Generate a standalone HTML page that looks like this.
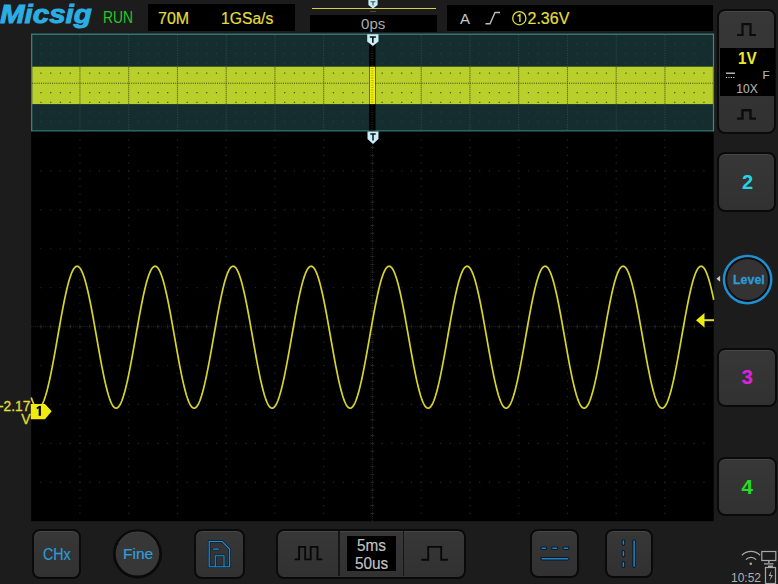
<!DOCTYPE html>
<html><head><meta charset="utf-8">
<style>
html,body{margin:0;padding:0;}
body{width:778px;height:584px;overflow:hidden;background:#1c1c1c;position:relative;font-family:"Liberation Sans",sans-serif;}
.a{position:absolute;}
.box{position:absolute;background:#000;}
.btn{position:absolute;box-sizing:border-box;background:linear-gradient(#383737,#323131);border:2px solid #0a0a0a;border-bottom-width:2.8px;border-radius:8px;box-shadow:inset 0 1px 0 #474646;}
.t{position:absolute;white-space:nowrap;line-height:1;}
</style></head>
<body>
<!-- logo -->
<div class="t" style="left:-0.5px;top:1.8px;font-size:25px;font-weight:bold;font-style:italic;color:#2aaee4;-webkit-text-stroke:0.9px #2aaee4;transform:scaleX(1.18);transform-origin:0 0;">Micsig</div>
<div class="t" style="left:103px;top:8.5px;font-size:17px;color:#25c82a;transform:scaleX(0.815);transform-origin:0 0;">RUN</div>
<div class="box" style="left:148px;top:4px;width:147.3px;height:27.2px;"></div>
<div class="t" style="left:158px;top:11px;font-size:16px;color:#e2df3a;-webkit-text-stroke:0.2px #e2df3a;">70M</div>
<div class="t" style="left:220.5px;top:11px;font-size:16px;color:#e2df3a;-webkit-text-stroke:0.2px #e2df3a;transform:scaleX(0.98);transform-origin:0 0;">1GSa/s</div>
<!-- timebase position -->
<div class="a" style="left:312px;top:7.5px;width:124px;height:1.5px;background:#d8cf40;"></div>
<div class="box" style="left:310px;top:14.5px;width:127px;height:17px;"></div>
<div class="t" style="left:361px;top:16.5px;font-size:14.5px;color:#ababab;transform:scaleX(1.04);transform-origin:0 0;">0ps</div>
<!-- trigger info -->
<div class="box" style="left:446.5px;top:4.5px;width:266px;height:26.5px;"></div>
<div class="t" style="left:460px;top:11px;font-size:15px;color:#c8c8c8;">A</div>
<svg class="a" style="left:484px;top:11px;" width="18" height="15"><path d="M1.5 12.8 H6 L11 1.5 H16" fill="none" stroke="#bdbdbd" stroke-width="1.4"/></svg>
<svg class="a" style="left:511px;top:10px;" width="17" height="17"><circle cx="8.3" cy="8.2" r="6.6" fill="none" stroke="#e2df3a" stroke-width="1.3"/><path d="M6.5 6.3 L8.9 4.6 V12" fill="none" stroke="#e2df3a" stroke-width="1.4"/></svg><div class="t" style="left:527.5px;top:11px;font-size:16px;color:#e2df3a;-webkit-text-stroke:0.2px #e2df3a;">2.36V</div>

<svg class="a" style="left:0;top:0;" width="778" height="584">
<!-- overview -->
<rect x="31.7" y="34.2" width="681.8" height="96.8" fill="#162d2f" stroke="#3a8a85" stroke-width="1.2"/>
<rect x="32.3" y="66.7" width="680.6" height="37.4" fill="#b9cf2c"/>
<line x1="79.95" y1="35.2" x2="79.95" y2="66.7" stroke="#2c5050" stroke-width="1" stroke-dasharray="1 1.5"/>
<line x1="79.95" y1="66.7" x2="79.95" y2="104.1" stroke="#3a4a08" stroke-width="1" stroke-dasharray="1 1"/>
<line x1="79.95" y1="104.1" x2="79.95" y2="130.60000000000002" stroke="#2c5050" stroke-width="1" stroke-dasharray="1 1.5"/>
<line x1="128.70" y1="35.2" x2="128.70" y2="66.7" stroke="#2c5050" stroke-width="1" stroke-dasharray="1 1.5"/>
<line x1="128.70" y1="66.7" x2="128.70" y2="104.1" stroke="#3a4a08" stroke-width="1" stroke-dasharray="1 1"/>
<line x1="128.70" y1="104.1" x2="128.70" y2="130.60000000000002" stroke="#2c5050" stroke-width="1" stroke-dasharray="1 1.5"/>
<line x1="177.45" y1="35.2" x2="177.45" y2="66.7" stroke="#2c5050" stroke-width="1" stroke-dasharray="1 1.5"/>
<line x1="177.45" y1="66.7" x2="177.45" y2="104.1" stroke="#3a4a08" stroke-width="1" stroke-dasharray="1 1"/>
<line x1="177.45" y1="104.1" x2="177.45" y2="130.60000000000002" stroke="#2c5050" stroke-width="1" stroke-dasharray="1 1.5"/>
<line x1="226.20" y1="35.2" x2="226.20" y2="66.7" stroke="#2c5050" stroke-width="1" stroke-dasharray="1 1.5"/>
<line x1="226.20" y1="66.7" x2="226.20" y2="104.1" stroke="#3a4a08" stroke-width="1" stroke-dasharray="1 1"/>
<line x1="226.20" y1="104.1" x2="226.20" y2="130.60000000000002" stroke="#2c5050" stroke-width="1" stroke-dasharray="1 1.5"/>
<line x1="274.95" y1="35.2" x2="274.95" y2="66.7" stroke="#2c5050" stroke-width="1" stroke-dasharray="1 1.5"/>
<line x1="274.95" y1="66.7" x2="274.95" y2="104.1" stroke="#3a4a08" stroke-width="1" stroke-dasharray="1 1"/>
<line x1="274.95" y1="104.1" x2="274.95" y2="130.60000000000002" stroke="#2c5050" stroke-width="1" stroke-dasharray="1 1.5"/>
<line x1="323.70" y1="35.2" x2="323.70" y2="66.7" stroke="#2c5050" stroke-width="1" stroke-dasharray="1 1.5"/>
<line x1="323.70" y1="66.7" x2="323.70" y2="104.1" stroke="#3a4a08" stroke-width="1" stroke-dasharray="1 1"/>
<line x1="323.70" y1="104.1" x2="323.70" y2="130.60000000000002" stroke="#2c5050" stroke-width="1" stroke-dasharray="1 1.5"/>
<line x1="372.45" y1="35.2" x2="372.45" y2="66.7" stroke="#2c5050" stroke-width="1" stroke-dasharray="1 1.5"/>
<line x1="372.45" y1="66.7" x2="372.45" y2="104.1" stroke="#3a4a08" stroke-width="1" stroke-dasharray="1 1"/>
<line x1="372.45" y1="104.1" x2="372.45" y2="130.60000000000002" stroke="#2c5050" stroke-width="1" stroke-dasharray="1 1.5"/>
<line x1="421.20" y1="35.2" x2="421.20" y2="66.7" stroke="#2c5050" stroke-width="1" stroke-dasharray="1 1.5"/>
<line x1="421.20" y1="66.7" x2="421.20" y2="104.1" stroke="#3a4a08" stroke-width="1" stroke-dasharray="1 1"/>
<line x1="421.20" y1="104.1" x2="421.20" y2="130.60000000000002" stroke="#2c5050" stroke-width="1" stroke-dasharray="1 1.5"/>
<line x1="469.95" y1="35.2" x2="469.95" y2="66.7" stroke="#2c5050" stroke-width="1" stroke-dasharray="1 1.5"/>
<line x1="469.95" y1="66.7" x2="469.95" y2="104.1" stroke="#3a4a08" stroke-width="1" stroke-dasharray="1 1"/>
<line x1="469.95" y1="104.1" x2="469.95" y2="130.60000000000002" stroke="#2c5050" stroke-width="1" stroke-dasharray="1 1.5"/>
<line x1="518.70" y1="35.2" x2="518.70" y2="66.7" stroke="#2c5050" stroke-width="1" stroke-dasharray="1 1.5"/>
<line x1="518.70" y1="66.7" x2="518.70" y2="104.1" stroke="#3a4a08" stroke-width="1" stroke-dasharray="1 1"/>
<line x1="518.70" y1="104.1" x2="518.70" y2="130.60000000000002" stroke="#2c5050" stroke-width="1" stroke-dasharray="1 1.5"/>
<line x1="567.45" y1="35.2" x2="567.45" y2="66.7" stroke="#2c5050" stroke-width="1" stroke-dasharray="1 1.5"/>
<line x1="567.45" y1="66.7" x2="567.45" y2="104.1" stroke="#3a4a08" stroke-width="1" stroke-dasharray="1 1"/>
<line x1="567.45" y1="104.1" x2="567.45" y2="130.60000000000002" stroke="#2c5050" stroke-width="1" stroke-dasharray="1 1.5"/>
<line x1="616.20" y1="35.2" x2="616.20" y2="66.7" stroke="#2c5050" stroke-width="1" stroke-dasharray="1 1.5"/>
<line x1="616.20" y1="66.7" x2="616.20" y2="104.1" stroke="#3a4a08" stroke-width="1" stroke-dasharray="1 1"/>
<line x1="616.20" y1="104.1" x2="616.20" y2="130.60000000000002" stroke="#2c5050" stroke-width="1" stroke-dasharray="1 1.5"/>
<line x1="664.95" y1="35.2" x2="664.95" y2="66.7" stroke="#2c5050" stroke-width="1" stroke-dasharray="1 1.5"/>
<line x1="664.95" y1="66.7" x2="664.95" y2="104.1" stroke="#3a4a08" stroke-width="1" stroke-dasharray="1 1"/>
<line x1="664.95" y1="104.1" x2="664.95" y2="130.60000000000002" stroke="#2c5050" stroke-width="1" stroke-dasharray="1 1.5"/>
<line x1="32.2" y1="83.3" x2="712.7" y2="83.3" stroke="#3a4a08" stroke-width="1.1" stroke-dasharray="1 1.2"/>
<path d="M40.35 43.34h1.2v1.2h-1.2z M50.10 43.34h1.2v1.2h-1.2z M59.85 43.34h1.2v1.2h-1.2z M69.60 43.34h1.2v1.2h-1.2z M89.10 43.34h1.2v1.2h-1.2z M98.85 43.34h1.2v1.2h-1.2z M108.60 43.34h1.2v1.2h-1.2z M118.35 43.34h1.2v1.2h-1.2z M137.85 43.34h1.2v1.2h-1.2z M147.60 43.34h1.2v1.2h-1.2z M157.35 43.34h1.2v1.2h-1.2z M167.10 43.34h1.2v1.2h-1.2z M186.60 43.34h1.2v1.2h-1.2z M196.35 43.34h1.2v1.2h-1.2z M206.10 43.34h1.2v1.2h-1.2z M215.85 43.34h1.2v1.2h-1.2z M235.35 43.34h1.2v1.2h-1.2z M245.10 43.34h1.2v1.2h-1.2z M254.85 43.34h1.2v1.2h-1.2z M264.60 43.34h1.2v1.2h-1.2z M284.10 43.34h1.2v1.2h-1.2z M293.85 43.34h1.2v1.2h-1.2z M303.60 43.34h1.2v1.2h-1.2z M313.35 43.34h1.2v1.2h-1.2z M332.85 43.34h1.2v1.2h-1.2z M342.60 43.34h1.2v1.2h-1.2z M352.35 43.34h1.2v1.2h-1.2z M362.10 43.34h1.2v1.2h-1.2z M381.60 43.34h1.2v1.2h-1.2z M391.35 43.34h1.2v1.2h-1.2z M401.10 43.34h1.2v1.2h-1.2z M410.85 43.34h1.2v1.2h-1.2z M430.35 43.34h1.2v1.2h-1.2z M440.10 43.34h1.2v1.2h-1.2z M449.85 43.34h1.2v1.2h-1.2z M459.60 43.34h1.2v1.2h-1.2z M479.10 43.34h1.2v1.2h-1.2z M488.85 43.34h1.2v1.2h-1.2z M498.60 43.34h1.2v1.2h-1.2z M508.35 43.34h1.2v1.2h-1.2z M527.85 43.34h1.2v1.2h-1.2z M537.60 43.34h1.2v1.2h-1.2z M547.35 43.34h1.2v1.2h-1.2z M557.10 43.34h1.2v1.2h-1.2z M576.60 43.34h1.2v1.2h-1.2z M586.35 43.34h1.2v1.2h-1.2z M596.10 43.34h1.2v1.2h-1.2z M605.85 43.34h1.2v1.2h-1.2z M625.35 43.34h1.2v1.2h-1.2z M635.10 43.34h1.2v1.2h-1.2z M644.85 43.34h1.2v1.2h-1.2z M654.60 43.34h1.2v1.2h-1.2z M674.10 43.34h1.2v1.2h-1.2z M683.85 43.34h1.2v1.2h-1.2z M693.60 43.34h1.2v1.2h-1.2z M703.35 43.34h1.2v1.2h-1.2z M40.35 53.08h1.2v1.2h-1.2z M50.10 53.08h1.2v1.2h-1.2z M59.85 53.08h1.2v1.2h-1.2z M69.60 53.08h1.2v1.2h-1.2z M89.10 53.08h1.2v1.2h-1.2z M98.85 53.08h1.2v1.2h-1.2z M108.60 53.08h1.2v1.2h-1.2z M118.35 53.08h1.2v1.2h-1.2z M137.85 53.08h1.2v1.2h-1.2z M147.60 53.08h1.2v1.2h-1.2z M157.35 53.08h1.2v1.2h-1.2z M167.10 53.08h1.2v1.2h-1.2z M186.60 53.08h1.2v1.2h-1.2z M196.35 53.08h1.2v1.2h-1.2z M206.10 53.08h1.2v1.2h-1.2z M215.85 53.08h1.2v1.2h-1.2z M235.35 53.08h1.2v1.2h-1.2z M245.10 53.08h1.2v1.2h-1.2z M254.85 53.08h1.2v1.2h-1.2z M264.60 53.08h1.2v1.2h-1.2z M284.10 53.08h1.2v1.2h-1.2z M293.85 53.08h1.2v1.2h-1.2z M303.60 53.08h1.2v1.2h-1.2z M313.35 53.08h1.2v1.2h-1.2z M332.85 53.08h1.2v1.2h-1.2z M342.60 53.08h1.2v1.2h-1.2z M352.35 53.08h1.2v1.2h-1.2z M362.10 53.08h1.2v1.2h-1.2z M381.60 53.08h1.2v1.2h-1.2z M391.35 53.08h1.2v1.2h-1.2z M401.10 53.08h1.2v1.2h-1.2z M410.85 53.08h1.2v1.2h-1.2z M430.35 53.08h1.2v1.2h-1.2z M440.10 53.08h1.2v1.2h-1.2z M449.85 53.08h1.2v1.2h-1.2z M459.60 53.08h1.2v1.2h-1.2z M479.10 53.08h1.2v1.2h-1.2z M488.85 53.08h1.2v1.2h-1.2z M498.60 53.08h1.2v1.2h-1.2z M508.35 53.08h1.2v1.2h-1.2z M527.85 53.08h1.2v1.2h-1.2z M537.60 53.08h1.2v1.2h-1.2z M547.35 53.08h1.2v1.2h-1.2z M557.10 53.08h1.2v1.2h-1.2z M576.60 53.08h1.2v1.2h-1.2z M586.35 53.08h1.2v1.2h-1.2z M596.10 53.08h1.2v1.2h-1.2z M605.85 53.08h1.2v1.2h-1.2z M625.35 53.08h1.2v1.2h-1.2z M635.10 53.08h1.2v1.2h-1.2z M644.85 53.08h1.2v1.2h-1.2z M654.60 53.08h1.2v1.2h-1.2z M674.10 53.08h1.2v1.2h-1.2z M683.85 53.08h1.2v1.2h-1.2z M693.60 53.08h1.2v1.2h-1.2z M703.35 53.08h1.2v1.2h-1.2z M40.35 62.82h1.2v1.2h-1.2z M50.10 62.82h1.2v1.2h-1.2z M59.85 62.82h1.2v1.2h-1.2z M69.60 62.82h1.2v1.2h-1.2z M89.10 62.82h1.2v1.2h-1.2z M98.85 62.82h1.2v1.2h-1.2z M108.60 62.82h1.2v1.2h-1.2z M118.35 62.82h1.2v1.2h-1.2z M137.85 62.82h1.2v1.2h-1.2z M147.60 62.82h1.2v1.2h-1.2z M157.35 62.82h1.2v1.2h-1.2z M167.10 62.82h1.2v1.2h-1.2z M186.60 62.82h1.2v1.2h-1.2z M196.35 62.82h1.2v1.2h-1.2z M206.10 62.82h1.2v1.2h-1.2z M215.85 62.82h1.2v1.2h-1.2z M235.35 62.82h1.2v1.2h-1.2z M245.10 62.82h1.2v1.2h-1.2z M254.85 62.82h1.2v1.2h-1.2z M264.60 62.82h1.2v1.2h-1.2z M284.10 62.82h1.2v1.2h-1.2z M293.85 62.82h1.2v1.2h-1.2z M303.60 62.82h1.2v1.2h-1.2z M313.35 62.82h1.2v1.2h-1.2z M332.85 62.82h1.2v1.2h-1.2z M342.60 62.82h1.2v1.2h-1.2z M352.35 62.82h1.2v1.2h-1.2z M362.10 62.82h1.2v1.2h-1.2z M381.60 62.82h1.2v1.2h-1.2z M391.35 62.82h1.2v1.2h-1.2z M401.10 62.82h1.2v1.2h-1.2z M410.85 62.82h1.2v1.2h-1.2z M430.35 62.82h1.2v1.2h-1.2z M440.10 62.82h1.2v1.2h-1.2z M449.85 62.82h1.2v1.2h-1.2z M459.60 62.82h1.2v1.2h-1.2z M479.10 62.82h1.2v1.2h-1.2z M488.85 62.82h1.2v1.2h-1.2z M498.60 62.82h1.2v1.2h-1.2z M508.35 62.82h1.2v1.2h-1.2z M527.85 62.82h1.2v1.2h-1.2z M537.60 62.82h1.2v1.2h-1.2z M547.35 62.82h1.2v1.2h-1.2z M557.10 62.82h1.2v1.2h-1.2z M576.60 62.82h1.2v1.2h-1.2z M586.35 62.82h1.2v1.2h-1.2z M596.10 62.82h1.2v1.2h-1.2z M605.85 62.82h1.2v1.2h-1.2z M625.35 62.82h1.2v1.2h-1.2z M635.10 62.82h1.2v1.2h-1.2z M644.85 62.82h1.2v1.2h-1.2z M654.60 62.82h1.2v1.2h-1.2z M674.10 62.82h1.2v1.2h-1.2z M683.85 62.82h1.2v1.2h-1.2z M693.60 62.82h1.2v1.2h-1.2z M703.35 62.82h1.2v1.2h-1.2z M40.35 111.52h1.2v1.2h-1.2z M50.10 111.52h1.2v1.2h-1.2z M59.85 111.52h1.2v1.2h-1.2z M69.60 111.52h1.2v1.2h-1.2z M89.10 111.52h1.2v1.2h-1.2z M98.85 111.52h1.2v1.2h-1.2z M108.60 111.52h1.2v1.2h-1.2z M118.35 111.52h1.2v1.2h-1.2z M137.85 111.52h1.2v1.2h-1.2z M147.60 111.52h1.2v1.2h-1.2z M157.35 111.52h1.2v1.2h-1.2z M167.10 111.52h1.2v1.2h-1.2z M186.60 111.52h1.2v1.2h-1.2z M196.35 111.52h1.2v1.2h-1.2z M206.10 111.52h1.2v1.2h-1.2z M215.85 111.52h1.2v1.2h-1.2z M235.35 111.52h1.2v1.2h-1.2z M245.10 111.52h1.2v1.2h-1.2z M254.85 111.52h1.2v1.2h-1.2z M264.60 111.52h1.2v1.2h-1.2z M284.10 111.52h1.2v1.2h-1.2z M293.85 111.52h1.2v1.2h-1.2z M303.60 111.52h1.2v1.2h-1.2z M313.35 111.52h1.2v1.2h-1.2z M332.85 111.52h1.2v1.2h-1.2z M342.60 111.52h1.2v1.2h-1.2z M352.35 111.52h1.2v1.2h-1.2z M362.10 111.52h1.2v1.2h-1.2z M381.60 111.52h1.2v1.2h-1.2z M391.35 111.52h1.2v1.2h-1.2z M401.10 111.52h1.2v1.2h-1.2z M410.85 111.52h1.2v1.2h-1.2z M430.35 111.52h1.2v1.2h-1.2z M440.10 111.52h1.2v1.2h-1.2z M449.85 111.52h1.2v1.2h-1.2z M459.60 111.52h1.2v1.2h-1.2z M479.10 111.52h1.2v1.2h-1.2z M488.85 111.52h1.2v1.2h-1.2z M498.60 111.52h1.2v1.2h-1.2z M508.35 111.52h1.2v1.2h-1.2z M527.85 111.52h1.2v1.2h-1.2z M537.60 111.52h1.2v1.2h-1.2z M547.35 111.52h1.2v1.2h-1.2z M557.10 111.52h1.2v1.2h-1.2z M576.60 111.52h1.2v1.2h-1.2z M586.35 111.52h1.2v1.2h-1.2z M596.10 111.52h1.2v1.2h-1.2z M605.85 111.52h1.2v1.2h-1.2z M625.35 111.52h1.2v1.2h-1.2z M635.10 111.52h1.2v1.2h-1.2z M644.85 111.52h1.2v1.2h-1.2z M654.60 111.52h1.2v1.2h-1.2z M674.10 111.52h1.2v1.2h-1.2z M683.85 111.52h1.2v1.2h-1.2z M693.60 111.52h1.2v1.2h-1.2z M703.35 111.52h1.2v1.2h-1.2z M40.35 121.26h1.2v1.2h-1.2z M50.10 121.26h1.2v1.2h-1.2z M59.85 121.26h1.2v1.2h-1.2z M69.60 121.26h1.2v1.2h-1.2z M89.10 121.26h1.2v1.2h-1.2z M98.85 121.26h1.2v1.2h-1.2z M108.60 121.26h1.2v1.2h-1.2z M118.35 121.26h1.2v1.2h-1.2z M137.85 121.26h1.2v1.2h-1.2z M147.60 121.26h1.2v1.2h-1.2z M157.35 121.26h1.2v1.2h-1.2z M167.10 121.26h1.2v1.2h-1.2z M186.60 121.26h1.2v1.2h-1.2z M196.35 121.26h1.2v1.2h-1.2z M206.10 121.26h1.2v1.2h-1.2z M215.85 121.26h1.2v1.2h-1.2z M235.35 121.26h1.2v1.2h-1.2z M245.10 121.26h1.2v1.2h-1.2z M254.85 121.26h1.2v1.2h-1.2z M264.60 121.26h1.2v1.2h-1.2z M284.10 121.26h1.2v1.2h-1.2z M293.85 121.26h1.2v1.2h-1.2z M303.60 121.26h1.2v1.2h-1.2z M313.35 121.26h1.2v1.2h-1.2z M332.85 121.26h1.2v1.2h-1.2z M342.60 121.26h1.2v1.2h-1.2z M352.35 121.26h1.2v1.2h-1.2z M362.10 121.26h1.2v1.2h-1.2z M381.60 121.26h1.2v1.2h-1.2z M391.35 121.26h1.2v1.2h-1.2z M401.10 121.26h1.2v1.2h-1.2z M410.85 121.26h1.2v1.2h-1.2z M430.35 121.26h1.2v1.2h-1.2z M440.10 121.26h1.2v1.2h-1.2z M449.85 121.26h1.2v1.2h-1.2z M459.60 121.26h1.2v1.2h-1.2z M479.10 121.26h1.2v1.2h-1.2z M488.85 121.26h1.2v1.2h-1.2z M498.60 121.26h1.2v1.2h-1.2z M508.35 121.26h1.2v1.2h-1.2z M527.85 121.26h1.2v1.2h-1.2z M537.60 121.26h1.2v1.2h-1.2z M547.35 121.26h1.2v1.2h-1.2z M557.10 121.26h1.2v1.2h-1.2z M576.60 121.26h1.2v1.2h-1.2z M586.35 121.26h1.2v1.2h-1.2z M596.10 121.26h1.2v1.2h-1.2z M605.85 121.26h1.2v1.2h-1.2z M625.35 121.26h1.2v1.2h-1.2z M635.10 121.26h1.2v1.2h-1.2z M644.85 121.26h1.2v1.2h-1.2z M654.60 121.26h1.2v1.2h-1.2z M674.10 121.26h1.2v1.2h-1.2z M683.85 121.26h1.2v1.2h-1.2z M693.60 121.26h1.2v1.2h-1.2z M703.35 121.26h1.2v1.2h-1.2z" fill="#223e3c"/>
<path d="M40.35 72.56h1.2v1.2h-1.2z M50.10 72.56h1.2v1.2h-1.2z M59.85 72.56h1.2v1.2h-1.2z M69.60 72.56h1.2v1.2h-1.2z M89.10 72.56h1.2v1.2h-1.2z M98.85 72.56h1.2v1.2h-1.2z M108.60 72.56h1.2v1.2h-1.2z M118.35 72.56h1.2v1.2h-1.2z M137.85 72.56h1.2v1.2h-1.2z M147.60 72.56h1.2v1.2h-1.2z M157.35 72.56h1.2v1.2h-1.2z M167.10 72.56h1.2v1.2h-1.2z M186.60 72.56h1.2v1.2h-1.2z M196.35 72.56h1.2v1.2h-1.2z M206.10 72.56h1.2v1.2h-1.2z M215.85 72.56h1.2v1.2h-1.2z M235.35 72.56h1.2v1.2h-1.2z M245.10 72.56h1.2v1.2h-1.2z M254.85 72.56h1.2v1.2h-1.2z M264.60 72.56h1.2v1.2h-1.2z M284.10 72.56h1.2v1.2h-1.2z M293.85 72.56h1.2v1.2h-1.2z M303.60 72.56h1.2v1.2h-1.2z M313.35 72.56h1.2v1.2h-1.2z M332.85 72.56h1.2v1.2h-1.2z M342.60 72.56h1.2v1.2h-1.2z M352.35 72.56h1.2v1.2h-1.2z M362.10 72.56h1.2v1.2h-1.2z M381.60 72.56h1.2v1.2h-1.2z M391.35 72.56h1.2v1.2h-1.2z M401.10 72.56h1.2v1.2h-1.2z M410.85 72.56h1.2v1.2h-1.2z M430.35 72.56h1.2v1.2h-1.2z M440.10 72.56h1.2v1.2h-1.2z M449.85 72.56h1.2v1.2h-1.2z M459.60 72.56h1.2v1.2h-1.2z M479.10 72.56h1.2v1.2h-1.2z M488.85 72.56h1.2v1.2h-1.2z M498.60 72.56h1.2v1.2h-1.2z M508.35 72.56h1.2v1.2h-1.2z M527.85 72.56h1.2v1.2h-1.2z M537.60 72.56h1.2v1.2h-1.2z M547.35 72.56h1.2v1.2h-1.2z M557.10 72.56h1.2v1.2h-1.2z M576.60 72.56h1.2v1.2h-1.2z M586.35 72.56h1.2v1.2h-1.2z M596.10 72.56h1.2v1.2h-1.2z M605.85 72.56h1.2v1.2h-1.2z M625.35 72.56h1.2v1.2h-1.2z M635.10 72.56h1.2v1.2h-1.2z M644.85 72.56h1.2v1.2h-1.2z M654.60 72.56h1.2v1.2h-1.2z M674.10 72.56h1.2v1.2h-1.2z M683.85 72.56h1.2v1.2h-1.2z M693.60 72.56h1.2v1.2h-1.2z M703.35 72.56h1.2v1.2h-1.2z M40.35 92.04h1.2v1.2h-1.2z M50.10 92.04h1.2v1.2h-1.2z M59.85 92.04h1.2v1.2h-1.2z M69.60 92.04h1.2v1.2h-1.2z M89.10 92.04h1.2v1.2h-1.2z M98.85 92.04h1.2v1.2h-1.2z M108.60 92.04h1.2v1.2h-1.2z M118.35 92.04h1.2v1.2h-1.2z M137.85 92.04h1.2v1.2h-1.2z M147.60 92.04h1.2v1.2h-1.2z M157.35 92.04h1.2v1.2h-1.2z M167.10 92.04h1.2v1.2h-1.2z M186.60 92.04h1.2v1.2h-1.2z M196.35 92.04h1.2v1.2h-1.2z M206.10 92.04h1.2v1.2h-1.2z M215.85 92.04h1.2v1.2h-1.2z M235.35 92.04h1.2v1.2h-1.2z M245.10 92.04h1.2v1.2h-1.2z M254.85 92.04h1.2v1.2h-1.2z M264.60 92.04h1.2v1.2h-1.2z M284.10 92.04h1.2v1.2h-1.2z M293.85 92.04h1.2v1.2h-1.2z M303.60 92.04h1.2v1.2h-1.2z M313.35 92.04h1.2v1.2h-1.2z M332.85 92.04h1.2v1.2h-1.2z M342.60 92.04h1.2v1.2h-1.2z M352.35 92.04h1.2v1.2h-1.2z M362.10 92.04h1.2v1.2h-1.2z M381.60 92.04h1.2v1.2h-1.2z M391.35 92.04h1.2v1.2h-1.2z M401.10 92.04h1.2v1.2h-1.2z M410.85 92.04h1.2v1.2h-1.2z M430.35 92.04h1.2v1.2h-1.2z M440.10 92.04h1.2v1.2h-1.2z M449.85 92.04h1.2v1.2h-1.2z M459.60 92.04h1.2v1.2h-1.2z M479.10 92.04h1.2v1.2h-1.2z M488.85 92.04h1.2v1.2h-1.2z M498.60 92.04h1.2v1.2h-1.2z M508.35 92.04h1.2v1.2h-1.2z M527.85 92.04h1.2v1.2h-1.2z M537.60 92.04h1.2v1.2h-1.2z M547.35 92.04h1.2v1.2h-1.2z M557.10 92.04h1.2v1.2h-1.2z M576.60 92.04h1.2v1.2h-1.2z M586.35 92.04h1.2v1.2h-1.2z M596.10 92.04h1.2v1.2h-1.2z M605.85 92.04h1.2v1.2h-1.2z M625.35 92.04h1.2v1.2h-1.2z M635.10 92.04h1.2v1.2h-1.2z M644.85 92.04h1.2v1.2h-1.2z M654.60 92.04h1.2v1.2h-1.2z M674.10 92.04h1.2v1.2h-1.2z M683.85 92.04h1.2v1.2h-1.2z M693.60 92.04h1.2v1.2h-1.2z M703.35 92.04h1.2v1.2h-1.2z M40.35 101.78h1.2v1.2h-1.2z M50.10 101.78h1.2v1.2h-1.2z M59.85 101.78h1.2v1.2h-1.2z M69.60 101.78h1.2v1.2h-1.2z M89.10 101.78h1.2v1.2h-1.2z M98.85 101.78h1.2v1.2h-1.2z M108.60 101.78h1.2v1.2h-1.2z M118.35 101.78h1.2v1.2h-1.2z M137.85 101.78h1.2v1.2h-1.2z M147.60 101.78h1.2v1.2h-1.2z M157.35 101.78h1.2v1.2h-1.2z M167.10 101.78h1.2v1.2h-1.2z M186.60 101.78h1.2v1.2h-1.2z M196.35 101.78h1.2v1.2h-1.2z M206.10 101.78h1.2v1.2h-1.2z M215.85 101.78h1.2v1.2h-1.2z M235.35 101.78h1.2v1.2h-1.2z M245.10 101.78h1.2v1.2h-1.2z M254.85 101.78h1.2v1.2h-1.2z M264.60 101.78h1.2v1.2h-1.2z M284.10 101.78h1.2v1.2h-1.2z M293.85 101.78h1.2v1.2h-1.2z M303.60 101.78h1.2v1.2h-1.2z M313.35 101.78h1.2v1.2h-1.2z M332.85 101.78h1.2v1.2h-1.2z M342.60 101.78h1.2v1.2h-1.2z M352.35 101.78h1.2v1.2h-1.2z M362.10 101.78h1.2v1.2h-1.2z M381.60 101.78h1.2v1.2h-1.2z M391.35 101.78h1.2v1.2h-1.2z M401.10 101.78h1.2v1.2h-1.2z M410.85 101.78h1.2v1.2h-1.2z M430.35 101.78h1.2v1.2h-1.2z M440.10 101.78h1.2v1.2h-1.2z M449.85 101.78h1.2v1.2h-1.2z M459.60 101.78h1.2v1.2h-1.2z M479.10 101.78h1.2v1.2h-1.2z M488.85 101.78h1.2v1.2h-1.2z M498.60 101.78h1.2v1.2h-1.2z M508.35 101.78h1.2v1.2h-1.2z M527.85 101.78h1.2v1.2h-1.2z M537.60 101.78h1.2v1.2h-1.2z M547.35 101.78h1.2v1.2h-1.2z M557.10 101.78h1.2v1.2h-1.2z M576.60 101.78h1.2v1.2h-1.2z M586.35 101.78h1.2v1.2h-1.2z M596.10 101.78h1.2v1.2h-1.2z M605.85 101.78h1.2v1.2h-1.2z M625.35 101.78h1.2v1.2h-1.2z M635.10 101.78h1.2v1.2h-1.2z M644.85 101.78h1.2v1.2h-1.2z M654.60 101.78h1.2v1.2h-1.2z M674.10 101.78h1.2v1.2h-1.2z M683.85 101.78h1.2v1.2h-1.2z M693.60 101.78h1.2v1.2h-1.2z M703.35 101.78h1.2v1.2h-1.2z" fill="#4a5a10"/>
<rect x="369.1" y="35" width="6.4" height="95.5" fill="#000"/>
<rect x="369.6" y="66.7" width="5.4" height="37.4" fill="#f2ee10"/>
<line x1="372.3" y1="68" x2="372.3" y2="103" stroke="#a8a410" stroke-width="2.4" stroke-dasharray="0.8 1.6"/>
<line x1="372.3" y1="46" x2="372.3" y2="66" stroke="#262626" stroke-width="2" stroke-dasharray="0.8 1.6"/>
<line x1="372.3" y1="105" x2="372.3" y2="130" stroke="#262626" stroke-width="2" stroke-dasharray="0.8 1.6"/>
<!-- main scope -->
<rect x="31.2" y="131.6" width="682.5" height="389.6" fill="#000"/>
<path d="M79.35 139.18h1.2v1.2h-1.2z M79.35 146.97h1.2v1.2h-1.2z M79.35 154.75h1.2v1.2h-1.2z M79.35 162.54h1.2v1.2h-1.2z M79.35 170.32h1.2v1.2h-1.2z M79.35 178.10h1.2v1.2h-1.2z M79.35 185.89h1.2v1.2h-1.2z M79.35 193.67h1.2v1.2h-1.2z M79.35 201.46h1.2v1.2h-1.2z M79.35 209.24h1.2v1.2h-1.2z M79.35 217.02h1.2v1.2h-1.2z M79.35 224.81h1.2v1.2h-1.2z M79.35 232.59h1.2v1.2h-1.2z M79.35 240.38h1.2v1.2h-1.2z M79.35 248.16h1.2v1.2h-1.2z M79.35 255.94h1.2v1.2h-1.2z M79.35 263.73h1.2v1.2h-1.2z M79.35 271.51h1.2v1.2h-1.2z M79.35 279.30h1.2v1.2h-1.2z M79.35 287.08h1.2v1.2h-1.2z M79.35 294.86h1.2v1.2h-1.2z M79.35 302.65h1.2v1.2h-1.2z M79.35 310.43h1.2v1.2h-1.2z M79.35 318.22h1.2v1.2h-1.2z M79.35 326.00h1.2v1.2h-1.2z M79.35 333.78h1.2v1.2h-1.2z M79.35 341.57h1.2v1.2h-1.2z M79.35 349.35h1.2v1.2h-1.2z M79.35 357.14h1.2v1.2h-1.2z M79.35 364.92h1.2v1.2h-1.2z M79.35 372.70h1.2v1.2h-1.2z M79.35 380.49h1.2v1.2h-1.2z M79.35 388.27h1.2v1.2h-1.2z M79.35 396.06h1.2v1.2h-1.2z M79.35 403.84h1.2v1.2h-1.2z M79.35 411.62h1.2v1.2h-1.2z M79.35 419.41h1.2v1.2h-1.2z M79.35 427.19h1.2v1.2h-1.2z M79.35 434.98h1.2v1.2h-1.2z M79.35 442.76h1.2v1.2h-1.2z M79.35 450.54h1.2v1.2h-1.2z M79.35 458.33h1.2v1.2h-1.2z M79.35 466.11h1.2v1.2h-1.2z M79.35 473.90h1.2v1.2h-1.2z M79.35 481.68h1.2v1.2h-1.2z M79.35 489.46h1.2v1.2h-1.2z M79.35 497.25h1.2v1.2h-1.2z M79.35 505.03h1.2v1.2h-1.2z M79.35 512.82h1.2v1.2h-1.2z" fill="#262626"/>
<path d="M128.10 139.18h1.2v1.2h-1.2z M128.10 146.97h1.2v1.2h-1.2z M128.10 154.75h1.2v1.2h-1.2z M128.10 162.54h1.2v1.2h-1.2z M128.10 170.32h1.2v1.2h-1.2z M128.10 178.10h1.2v1.2h-1.2z M128.10 185.89h1.2v1.2h-1.2z M128.10 193.67h1.2v1.2h-1.2z M128.10 201.46h1.2v1.2h-1.2z M128.10 209.24h1.2v1.2h-1.2z M128.10 217.02h1.2v1.2h-1.2z M128.10 224.81h1.2v1.2h-1.2z M128.10 232.59h1.2v1.2h-1.2z M128.10 240.38h1.2v1.2h-1.2z M128.10 248.16h1.2v1.2h-1.2z M128.10 255.94h1.2v1.2h-1.2z M128.10 263.73h1.2v1.2h-1.2z M128.10 271.51h1.2v1.2h-1.2z M128.10 279.30h1.2v1.2h-1.2z M128.10 287.08h1.2v1.2h-1.2z M128.10 294.86h1.2v1.2h-1.2z M128.10 302.65h1.2v1.2h-1.2z M128.10 310.43h1.2v1.2h-1.2z M128.10 318.22h1.2v1.2h-1.2z M128.10 326.00h1.2v1.2h-1.2z M128.10 333.78h1.2v1.2h-1.2z M128.10 341.57h1.2v1.2h-1.2z M128.10 349.35h1.2v1.2h-1.2z M128.10 357.14h1.2v1.2h-1.2z M128.10 364.92h1.2v1.2h-1.2z M128.10 372.70h1.2v1.2h-1.2z M128.10 380.49h1.2v1.2h-1.2z M128.10 388.27h1.2v1.2h-1.2z M128.10 396.06h1.2v1.2h-1.2z M128.10 403.84h1.2v1.2h-1.2z M128.10 411.62h1.2v1.2h-1.2z M128.10 419.41h1.2v1.2h-1.2z M128.10 427.19h1.2v1.2h-1.2z M128.10 434.98h1.2v1.2h-1.2z M128.10 442.76h1.2v1.2h-1.2z M128.10 450.54h1.2v1.2h-1.2z M128.10 458.33h1.2v1.2h-1.2z M128.10 466.11h1.2v1.2h-1.2z M128.10 473.90h1.2v1.2h-1.2z M128.10 481.68h1.2v1.2h-1.2z M128.10 489.46h1.2v1.2h-1.2z M128.10 497.25h1.2v1.2h-1.2z M128.10 505.03h1.2v1.2h-1.2z M128.10 512.82h1.2v1.2h-1.2z" fill="#262626"/>
<path d="M176.85 139.18h1.2v1.2h-1.2z M176.85 146.97h1.2v1.2h-1.2z M176.85 154.75h1.2v1.2h-1.2z M176.85 162.54h1.2v1.2h-1.2z M176.85 170.32h1.2v1.2h-1.2z M176.85 178.10h1.2v1.2h-1.2z M176.85 185.89h1.2v1.2h-1.2z M176.85 193.67h1.2v1.2h-1.2z M176.85 201.46h1.2v1.2h-1.2z M176.85 209.24h1.2v1.2h-1.2z M176.85 217.02h1.2v1.2h-1.2z M176.85 224.81h1.2v1.2h-1.2z M176.85 232.59h1.2v1.2h-1.2z M176.85 240.38h1.2v1.2h-1.2z M176.85 248.16h1.2v1.2h-1.2z M176.85 255.94h1.2v1.2h-1.2z M176.85 263.73h1.2v1.2h-1.2z M176.85 271.51h1.2v1.2h-1.2z M176.85 279.30h1.2v1.2h-1.2z M176.85 287.08h1.2v1.2h-1.2z M176.85 294.86h1.2v1.2h-1.2z M176.85 302.65h1.2v1.2h-1.2z M176.85 310.43h1.2v1.2h-1.2z M176.85 318.22h1.2v1.2h-1.2z M176.85 326.00h1.2v1.2h-1.2z M176.85 333.78h1.2v1.2h-1.2z M176.85 341.57h1.2v1.2h-1.2z M176.85 349.35h1.2v1.2h-1.2z M176.85 357.14h1.2v1.2h-1.2z M176.85 364.92h1.2v1.2h-1.2z M176.85 372.70h1.2v1.2h-1.2z M176.85 380.49h1.2v1.2h-1.2z M176.85 388.27h1.2v1.2h-1.2z M176.85 396.06h1.2v1.2h-1.2z M176.85 403.84h1.2v1.2h-1.2z M176.85 411.62h1.2v1.2h-1.2z M176.85 419.41h1.2v1.2h-1.2z M176.85 427.19h1.2v1.2h-1.2z M176.85 434.98h1.2v1.2h-1.2z M176.85 442.76h1.2v1.2h-1.2z M176.85 450.54h1.2v1.2h-1.2z M176.85 458.33h1.2v1.2h-1.2z M176.85 466.11h1.2v1.2h-1.2z M176.85 473.90h1.2v1.2h-1.2z M176.85 481.68h1.2v1.2h-1.2z M176.85 489.46h1.2v1.2h-1.2z M176.85 497.25h1.2v1.2h-1.2z M176.85 505.03h1.2v1.2h-1.2z M176.85 512.82h1.2v1.2h-1.2z" fill="#262626"/>
<path d="M225.60 139.18h1.2v1.2h-1.2z M225.60 146.97h1.2v1.2h-1.2z M225.60 154.75h1.2v1.2h-1.2z M225.60 162.54h1.2v1.2h-1.2z M225.60 170.32h1.2v1.2h-1.2z M225.60 178.10h1.2v1.2h-1.2z M225.60 185.89h1.2v1.2h-1.2z M225.60 193.67h1.2v1.2h-1.2z M225.60 201.46h1.2v1.2h-1.2z M225.60 209.24h1.2v1.2h-1.2z M225.60 217.02h1.2v1.2h-1.2z M225.60 224.81h1.2v1.2h-1.2z M225.60 232.59h1.2v1.2h-1.2z M225.60 240.38h1.2v1.2h-1.2z M225.60 248.16h1.2v1.2h-1.2z M225.60 255.94h1.2v1.2h-1.2z M225.60 263.73h1.2v1.2h-1.2z M225.60 271.51h1.2v1.2h-1.2z M225.60 279.30h1.2v1.2h-1.2z M225.60 287.08h1.2v1.2h-1.2z M225.60 294.86h1.2v1.2h-1.2z M225.60 302.65h1.2v1.2h-1.2z M225.60 310.43h1.2v1.2h-1.2z M225.60 318.22h1.2v1.2h-1.2z M225.60 326.00h1.2v1.2h-1.2z M225.60 333.78h1.2v1.2h-1.2z M225.60 341.57h1.2v1.2h-1.2z M225.60 349.35h1.2v1.2h-1.2z M225.60 357.14h1.2v1.2h-1.2z M225.60 364.92h1.2v1.2h-1.2z M225.60 372.70h1.2v1.2h-1.2z M225.60 380.49h1.2v1.2h-1.2z M225.60 388.27h1.2v1.2h-1.2z M225.60 396.06h1.2v1.2h-1.2z M225.60 403.84h1.2v1.2h-1.2z M225.60 411.62h1.2v1.2h-1.2z M225.60 419.41h1.2v1.2h-1.2z M225.60 427.19h1.2v1.2h-1.2z M225.60 434.98h1.2v1.2h-1.2z M225.60 442.76h1.2v1.2h-1.2z M225.60 450.54h1.2v1.2h-1.2z M225.60 458.33h1.2v1.2h-1.2z M225.60 466.11h1.2v1.2h-1.2z M225.60 473.90h1.2v1.2h-1.2z M225.60 481.68h1.2v1.2h-1.2z M225.60 489.46h1.2v1.2h-1.2z M225.60 497.25h1.2v1.2h-1.2z M225.60 505.03h1.2v1.2h-1.2z M225.60 512.82h1.2v1.2h-1.2z" fill="#262626"/>
<path d="M274.35 139.18h1.2v1.2h-1.2z M274.35 146.97h1.2v1.2h-1.2z M274.35 154.75h1.2v1.2h-1.2z M274.35 162.54h1.2v1.2h-1.2z M274.35 170.32h1.2v1.2h-1.2z M274.35 178.10h1.2v1.2h-1.2z M274.35 185.89h1.2v1.2h-1.2z M274.35 193.67h1.2v1.2h-1.2z M274.35 201.46h1.2v1.2h-1.2z M274.35 209.24h1.2v1.2h-1.2z M274.35 217.02h1.2v1.2h-1.2z M274.35 224.81h1.2v1.2h-1.2z M274.35 232.59h1.2v1.2h-1.2z M274.35 240.38h1.2v1.2h-1.2z M274.35 248.16h1.2v1.2h-1.2z M274.35 255.94h1.2v1.2h-1.2z M274.35 263.73h1.2v1.2h-1.2z M274.35 271.51h1.2v1.2h-1.2z M274.35 279.30h1.2v1.2h-1.2z M274.35 287.08h1.2v1.2h-1.2z M274.35 294.86h1.2v1.2h-1.2z M274.35 302.65h1.2v1.2h-1.2z M274.35 310.43h1.2v1.2h-1.2z M274.35 318.22h1.2v1.2h-1.2z M274.35 326.00h1.2v1.2h-1.2z M274.35 333.78h1.2v1.2h-1.2z M274.35 341.57h1.2v1.2h-1.2z M274.35 349.35h1.2v1.2h-1.2z M274.35 357.14h1.2v1.2h-1.2z M274.35 364.92h1.2v1.2h-1.2z M274.35 372.70h1.2v1.2h-1.2z M274.35 380.49h1.2v1.2h-1.2z M274.35 388.27h1.2v1.2h-1.2z M274.35 396.06h1.2v1.2h-1.2z M274.35 403.84h1.2v1.2h-1.2z M274.35 411.62h1.2v1.2h-1.2z M274.35 419.41h1.2v1.2h-1.2z M274.35 427.19h1.2v1.2h-1.2z M274.35 434.98h1.2v1.2h-1.2z M274.35 442.76h1.2v1.2h-1.2z M274.35 450.54h1.2v1.2h-1.2z M274.35 458.33h1.2v1.2h-1.2z M274.35 466.11h1.2v1.2h-1.2z M274.35 473.90h1.2v1.2h-1.2z M274.35 481.68h1.2v1.2h-1.2z M274.35 489.46h1.2v1.2h-1.2z M274.35 497.25h1.2v1.2h-1.2z M274.35 505.03h1.2v1.2h-1.2z M274.35 512.82h1.2v1.2h-1.2z" fill="#262626"/>
<path d="M323.10 139.18h1.2v1.2h-1.2z M323.10 146.97h1.2v1.2h-1.2z M323.10 154.75h1.2v1.2h-1.2z M323.10 162.54h1.2v1.2h-1.2z M323.10 170.32h1.2v1.2h-1.2z M323.10 178.10h1.2v1.2h-1.2z M323.10 185.89h1.2v1.2h-1.2z M323.10 193.67h1.2v1.2h-1.2z M323.10 201.46h1.2v1.2h-1.2z M323.10 209.24h1.2v1.2h-1.2z M323.10 217.02h1.2v1.2h-1.2z M323.10 224.81h1.2v1.2h-1.2z M323.10 232.59h1.2v1.2h-1.2z M323.10 240.38h1.2v1.2h-1.2z M323.10 248.16h1.2v1.2h-1.2z M323.10 255.94h1.2v1.2h-1.2z M323.10 263.73h1.2v1.2h-1.2z M323.10 271.51h1.2v1.2h-1.2z M323.10 279.30h1.2v1.2h-1.2z M323.10 287.08h1.2v1.2h-1.2z M323.10 294.86h1.2v1.2h-1.2z M323.10 302.65h1.2v1.2h-1.2z M323.10 310.43h1.2v1.2h-1.2z M323.10 318.22h1.2v1.2h-1.2z M323.10 326.00h1.2v1.2h-1.2z M323.10 333.78h1.2v1.2h-1.2z M323.10 341.57h1.2v1.2h-1.2z M323.10 349.35h1.2v1.2h-1.2z M323.10 357.14h1.2v1.2h-1.2z M323.10 364.92h1.2v1.2h-1.2z M323.10 372.70h1.2v1.2h-1.2z M323.10 380.49h1.2v1.2h-1.2z M323.10 388.27h1.2v1.2h-1.2z M323.10 396.06h1.2v1.2h-1.2z M323.10 403.84h1.2v1.2h-1.2z M323.10 411.62h1.2v1.2h-1.2z M323.10 419.41h1.2v1.2h-1.2z M323.10 427.19h1.2v1.2h-1.2z M323.10 434.98h1.2v1.2h-1.2z M323.10 442.76h1.2v1.2h-1.2z M323.10 450.54h1.2v1.2h-1.2z M323.10 458.33h1.2v1.2h-1.2z M323.10 466.11h1.2v1.2h-1.2z M323.10 473.90h1.2v1.2h-1.2z M323.10 481.68h1.2v1.2h-1.2z M323.10 489.46h1.2v1.2h-1.2z M323.10 497.25h1.2v1.2h-1.2z M323.10 505.03h1.2v1.2h-1.2z M323.10 512.82h1.2v1.2h-1.2z" fill="#262626"/>
<path d="M371.85 139.18h1.2v1.2h-1.2z M371.85 146.97h1.2v1.2h-1.2z M371.85 154.75h1.2v1.2h-1.2z M371.85 162.54h1.2v1.2h-1.2z M371.85 170.32h1.2v1.2h-1.2z M371.85 178.10h1.2v1.2h-1.2z M371.85 185.89h1.2v1.2h-1.2z M371.85 193.67h1.2v1.2h-1.2z M371.85 201.46h1.2v1.2h-1.2z M371.85 209.24h1.2v1.2h-1.2z M371.85 217.02h1.2v1.2h-1.2z M371.85 224.81h1.2v1.2h-1.2z M371.85 232.59h1.2v1.2h-1.2z M371.85 240.38h1.2v1.2h-1.2z M371.85 248.16h1.2v1.2h-1.2z M371.85 255.94h1.2v1.2h-1.2z M371.85 263.73h1.2v1.2h-1.2z M371.85 271.51h1.2v1.2h-1.2z M371.85 279.30h1.2v1.2h-1.2z M371.85 287.08h1.2v1.2h-1.2z M371.85 294.86h1.2v1.2h-1.2z M371.85 302.65h1.2v1.2h-1.2z M371.85 310.43h1.2v1.2h-1.2z M371.85 318.22h1.2v1.2h-1.2z M371.85 326.00h1.2v1.2h-1.2z M371.85 333.78h1.2v1.2h-1.2z M371.85 341.57h1.2v1.2h-1.2z M371.85 349.35h1.2v1.2h-1.2z M371.85 357.14h1.2v1.2h-1.2z M371.85 364.92h1.2v1.2h-1.2z M371.85 372.70h1.2v1.2h-1.2z M371.85 380.49h1.2v1.2h-1.2z M371.85 388.27h1.2v1.2h-1.2z M371.85 396.06h1.2v1.2h-1.2z M371.85 403.84h1.2v1.2h-1.2z M371.85 411.62h1.2v1.2h-1.2z M371.85 419.41h1.2v1.2h-1.2z M371.85 427.19h1.2v1.2h-1.2z M371.85 434.98h1.2v1.2h-1.2z M371.85 442.76h1.2v1.2h-1.2z M371.85 450.54h1.2v1.2h-1.2z M371.85 458.33h1.2v1.2h-1.2z M371.85 466.11h1.2v1.2h-1.2z M371.85 473.90h1.2v1.2h-1.2z M371.85 481.68h1.2v1.2h-1.2z M371.85 489.46h1.2v1.2h-1.2z M371.85 497.25h1.2v1.2h-1.2z M371.85 505.03h1.2v1.2h-1.2z M371.85 512.82h1.2v1.2h-1.2z" fill="#262626"/>
<path d="M420.60 139.18h1.2v1.2h-1.2z M420.60 146.97h1.2v1.2h-1.2z M420.60 154.75h1.2v1.2h-1.2z M420.60 162.54h1.2v1.2h-1.2z M420.60 170.32h1.2v1.2h-1.2z M420.60 178.10h1.2v1.2h-1.2z M420.60 185.89h1.2v1.2h-1.2z M420.60 193.67h1.2v1.2h-1.2z M420.60 201.46h1.2v1.2h-1.2z M420.60 209.24h1.2v1.2h-1.2z M420.60 217.02h1.2v1.2h-1.2z M420.60 224.81h1.2v1.2h-1.2z M420.60 232.59h1.2v1.2h-1.2z M420.60 240.38h1.2v1.2h-1.2z M420.60 248.16h1.2v1.2h-1.2z M420.60 255.94h1.2v1.2h-1.2z M420.60 263.73h1.2v1.2h-1.2z M420.60 271.51h1.2v1.2h-1.2z M420.60 279.30h1.2v1.2h-1.2z M420.60 287.08h1.2v1.2h-1.2z M420.60 294.86h1.2v1.2h-1.2z M420.60 302.65h1.2v1.2h-1.2z M420.60 310.43h1.2v1.2h-1.2z M420.60 318.22h1.2v1.2h-1.2z M420.60 326.00h1.2v1.2h-1.2z M420.60 333.78h1.2v1.2h-1.2z M420.60 341.57h1.2v1.2h-1.2z M420.60 349.35h1.2v1.2h-1.2z M420.60 357.14h1.2v1.2h-1.2z M420.60 364.92h1.2v1.2h-1.2z M420.60 372.70h1.2v1.2h-1.2z M420.60 380.49h1.2v1.2h-1.2z M420.60 388.27h1.2v1.2h-1.2z M420.60 396.06h1.2v1.2h-1.2z M420.60 403.84h1.2v1.2h-1.2z M420.60 411.62h1.2v1.2h-1.2z M420.60 419.41h1.2v1.2h-1.2z M420.60 427.19h1.2v1.2h-1.2z M420.60 434.98h1.2v1.2h-1.2z M420.60 442.76h1.2v1.2h-1.2z M420.60 450.54h1.2v1.2h-1.2z M420.60 458.33h1.2v1.2h-1.2z M420.60 466.11h1.2v1.2h-1.2z M420.60 473.90h1.2v1.2h-1.2z M420.60 481.68h1.2v1.2h-1.2z M420.60 489.46h1.2v1.2h-1.2z M420.60 497.25h1.2v1.2h-1.2z M420.60 505.03h1.2v1.2h-1.2z M420.60 512.82h1.2v1.2h-1.2z" fill="#262626"/>
<path d="M469.35 139.18h1.2v1.2h-1.2z M469.35 146.97h1.2v1.2h-1.2z M469.35 154.75h1.2v1.2h-1.2z M469.35 162.54h1.2v1.2h-1.2z M469.35 170.32h1.2v1.2h-1.2z M469.35 178.10h1.2v1.2h-1.2z M469.35 185.89h1.2v1.2h-1.2z M469.35 193.67h1.2v1.2h-1.2z M469.35 201.46h1.2v1.2h-1.2z M469.35 209.24h1.2v1.2h-1.2z M469.35 217.02h1.2v1.2h-1.2z M469.35 224.81h1.2v1.2h-1.2z M469.35 232.59h1.2v1.2h-1.2z M469.35 240.38h1.2v1.2h-1.2z M469.35 248.16h1.2v1.2h-1.2z M469.35 255.94h1.2v1.2h-1.2z M469.35 263.73h1.2v1.2h-1.2z M469.35 271.51h1.2v1.2h-1.2z M469.35 279.30h1.2v1.2h-1.2z M469.35 287.08h1.2v1.2h-1.2z M469.35 294.86h1.2v1.2h-1.2z M469.35 302.65h1.2v1.2h-1.2z M469.35 310.43h1.2v1.2h-1.2z M469.35 318.22h1.2v1.2h-1.2z M469.35 326.00h1.2v1.2h-1.2z M469.35 333.78h1.2v1.2h-1.2z M469.35 341.57h1.2v1.2h-1.2z M469.35 349.35h1.2v1.2h-1.2z M469.35 357.14h1.2v1.2h-1.2z M469.35 364.92h1.2v1.2h-1.2z M469.35 372.70h1.2v1.2h-1.2z M469.35 380.49h1.2v1.2h-1.2z M469.35 388.27h1.2v1.2h-1.2z M469.35 396.06h1.2v1.2h-1.2z M469.35 403.84h1.2v1.2h-1.2z M469.35 411.62h1.2v1.2h-1.2z M469.35 419.41h1.2v1.2h-1.2z M469.35 427.19h1.2v1.2h-1.2z M469.35 434.98h1.2v1.2h-1.2z M469.35 442.76h1.2v1.2h-1.2z M469.35 450.54h1.2v1.2h-1.2z M469.35 458.33h1.2v1.2h-1.2z M469.35 466.11h1.2v1.2h-1.2z M469.35 473.90h1.2v1.2h-1.2z M469.35 481.68h1.2v1.2h-1.2z M469.35 489.46h1.2v1.2h-1.2z M469.35 497.25h1.2v1.2h-1.2z M469.35 505.03h1.2v1.2h-1.2z M469.35 512.82h1.2v1.2h-1.2z" fill="#262626"/>
<path d="M518.10 139.18h1.2v1.2h-1.2z M518.10 146.97h1.2v1.2h-1.2z M518.10 154.75h1.2v1.2h-1.2z M518.10 162.54h1.2v1.2h-1.2z M518.10 170.32h1.2v1.2h-1.2z M518.10 178.10h1.2v1.2h-1.2z M518.10 185.89h1.2v1.2h-1.2z M518.10 193.67h1.2v1.2h-1.2z M518.10 201.46h1.2v1.2h-1.2z M518.10 209.24h1.2v1.2h-1.2z M518.10 217.02h1.2v1.2h-1.2z M518.10 224.81h1.2v1.2h-1.2z M518.10 232.59h1.2v1.2h-1.2z M518.10 240.38h1.2v1.2h-1.2z M518.10 248.16h1.2v1.2h-1.2z M518.10 255.94h1.2v1.2h-1.2z M518.10 263.73h1.2v1.2h-1.2z M518.10 271.51h1.2v1.2h-1.2z M518.10 279.30h1.2v1.2h-1.2z M518.10 287.08h1.2v1.2h-1.2z M518.10 294.86h1.2v1.2h-1.2z M518.10 302.65h1.2v1.2h-1.2z M518.10 310.43h1.2v1.2h-1.2z M518.10 318.22h1.2v1.2h-1.2z M518.10 326.00h1.2v1.2h-1.2z M518.10 333.78h1.2v1.2h-1.2z M518.10 341.57h1.2v1.2h-1.2z M518.10 349.35h1.2v1.2h-1.2z M518.10 357.14h1.2v1.2h-1.2z M518.10 364.92h1.2v1.2h-1.2z M518.10 372.70h1.2v1.2h-1.2z M518.10 380.49h1.2v1.2h-1.2z M518.10 388.27h1.2v1.2h-1.2z M518.10 396.06h1.2v1.2h-1.2z M518.10 403.84h1.2v1.2h-1.2z M518.10 411.62h1.2v1.2h-1.2z M518.10 419.41h1.2v1.2h-1.2z M518.10 427.19h1.2v1.2h-1.2z M518.10 434.98h1.2v1.2h-1.2z M518.10 442.76h1.2v1.2h-1.2z M518.10 450.54h1.2v1.2h-1.2z M518.10 458.33h1.2v1.2h-1.2z M518.10 466.11h1.2v1.2h-1.2z M518.10 473.90h1.2v1.2h-1.2z M518.10 481.68h1.2v1.2h-1.2z M518.10 489.46h1.2v1.2h-1.2z M518.10 497.25h1.2v1.2h-1.2z M518.10 505.03h1.2v1.2h-1.2z M518.10 512.82h1.2v1.2h-1.2z" fill="#262626"/>
<path d="M566.85 139.18h1.2v1.2h-1.2z M566.85 146.97h1.2v1.2h-1.2z M566.85 154.75h1.2v1.2h-1.2z M566.85 162.54h1.2v1.2h-1.2z M566.85 170.32h1.2v1.2h-1.2z M566.85 178.10h1.2v1.2h-1.2z M566.85 185.89h1.2v1.2h-1.2z M566.85 193.67h1.2v1.2h-1.2z M566.85 201.46h1.2v1.2h-1.2z M566.85 209.24h1.2v1.2h-1.2z M566.85 217.02h1.2v1.2h-1.2z M566.85 224.81h1.2v1.2h-1.2z M566.85 232.59h1.2v1.2h-1.2z M566.85 240.38h1.2v1.2h-1.2z M566.85 248.16h1.2v1.2h-1.2z M566.85 255.94h1.2v1.2h-1.2z M566.85 263.73h1.2v1.2h-1.2z M566.85 271.51h1.2v1.2h-1.2z M566.85 279.30h1.2v1.2h-1.2z M566.85 287.08h1.2v1.2h-1.2z M566.85 294.86h1.2v1.2h-1.2z M566.85 302.65h1.2v1.2h-1.2z M566.85 310.43h1.2v1.2h-1.2z M566.85 318.22h1.2v1.2h-1.2z M566.85 326.00h1.2v1.2h-1.2z M566.85 333.78h1.2v1.2h-1.2z M566.85 341.57h1.2v1.2h-1.2z M566.85 349.35h1.2v1.2h-1.2z M566.85 357.14h1.2v1.2h-1.2z M566.85 364.92h1.2v1.2h-1.2z M566.85 372.70h1.2v1.2h-1.2z M566.85 380.49h1.2v1.2h-1.2z M566.85 388.27h1.2v1.2h-1.2z M566.85 396.06h1.2v1.2h-1.2z M566.85 403.84h1.2v1.2h-1.2z M566.85 411.62h1.2v1.2h-1.2z M566.85 419.41h1.2v1.2h-1.2z M566.85 427.19h1.2v1.2h-1.2z M566.85 434.98h1.2v1.2h-1.2z M566.85 442.76h1.2v1.2h-1.2z M566.85 450.54h1.2v1.2h-1.2z M566.85 458.33h1.2v1.2h-1.2z M566.85 466.11h1.2v1.2h-1.2z M566.85 473.90h1.2v1.2h-1.2z M566.85 481.68h1.2v1.2h-1.2z M566.85 489.46h1.2v1.2h-1.2z M566.85 497.25h1.2v1.2h-1.2z M566.85 505.03h1.2v1.2h-1.2z M566.85 512.82h1.2v1.2h-1.2z" fill="#262626"/>
<path d="M615.60 139.18h1.2v1.2h-1.2z M615.60 146.97h1.2v1.2h-1.2z M615.60 154.75h1.2v1.2h-1.2z M615.60 162.54h1.2v1.2h-1.2z M615.60 170.32h1.2v1.2h-1.2z M615.60 178.10h1.2v1.2h-1.2z M615.60 185.89h1.2v1.2h-1.2z M615.60 193.67h1.2v1.2h-1.2z M615.60 201.46h1.2v1.2h-1.2z M615.60 209.24h1.2v1.2h-1.2z M615.60 217.02h1.2v1.2h-1.2z M615.60 224.81h1.2v1.2h-1.2z M615.60 232.59h1.2v1.2h-1.2z M615.60 240.38h1.2v1.2h-1.2z M615.60 248.16h1.2v1.2h-1.2z M615.60 255.94h1.2v1.2h-1.2z M615.60 263.73h1.2v1.2h-1.2z M615.60 271.51h1.2v1.2h-1.2z M615.60 279.30h1.2v1.2h-1.2z M615.60 287.08h1.2v1.2h-1.2z M615.60 294.86h1.2v1.2h-1.2z M615.60 302.65h1.2v1.2h-1.2z M615.60 310.43h1.2v1.2h-1.2z M615.60 318.22h1.2v1.2h-1.2z M615.60 326.00h1.2v1.2h-1.2z M615.60 333.78h1.2v1.2h-1.2z M615.60 341.57h1.2v1.2h-1.2z M615.60 349.35h1.2v1.2h-1.2z M615.60 357.14h1.2v1.2h-1.2z M615.60 364.92h1.2v1.2h-1.2z M615.60 372.70h1.2v1.2h-1.2z M615.60 380.49h1.2v1.2h-1.2z M615.60 388.27h1.2v1.2h-1.2z M615.60 396.06h1.2v1.2h-1.2z M615.60 403.84h1.2v1.2h-1.2z M615.60 411.62h1.2v1.2h-1.2z M615.60 419.41h1.2v1.2h-1.2z M615.60 427.19h1.2v1.2h-1.2z M615.60 434.98h1.2v1.2h-1.2z M615.60 442.76h1.2v1.2h-1.2z M615.60 450.54h1.2v1.2h-1.2z M615.60 458.33h1.2v1.2h-1.2z M615.60 466.11h1.2v1.2h-1.2z M615.60 473.90h1.2v1.2h-1.2z M615.60 481.68h1.2v1.2h-1.2z M615.60 489.46h1.2v1.2h-1.2z M615.60 497.25h1.2v1.2h-1.2z M615.60 505.03h1.2v1.2h-1.2z M615.60 512.82h1.2v1.2h-1.2z" fill="#262626"/>
<path d="M664.35 139.18h1.2v1.2h-1.2z M664.35 146.97h1.2v1.2h-1.2z M664.35 154.75h1.2v1.2h-1.2z M664.35 162.54h1.2v1.2h-1.2z M664.35 170.32h1.2v1.2h-1.2z M664.35 178.10h1.2v1.2h-1.2z M664.35 185.89h1.2v1.2h-1.2z M664.35 193.67h1.2v1.2h-1.2z M664.35 201.46h1.2v1.2h-1.2z M664.35 209.24h1.2v1.2h-1.2z M664.35 217.02h1.2v1.2h-1.2z M664.35 224.81h1.2v1.2h-1.2z M664.35 232.59h1.2v1.2h-1.2z M664.35 240.38h1.2v1.2h-1.2z M664.35 248.16h1.2v1.2h-1.2z M664.35 255.94h1.2v1.2h-1.2z M664.35 263.73h1.2v1.2h-1.2z M664.35 271.51h1.2v1.2h-1.2z M664.35 279.30h1.2v1.2h-1.2z M664.35 287.08h1.2v1.2h-1.2z M664.35 294.86h1.2v1.2h-1.2z M664.35 302.65h1.2v1.2h-1.2z M664.35 310.43h1.2v1.2h-1.2z M664.35 318.22h1.2v1.2h-1.2z M664.35 326.00h1.2v1.2h-1.2z M664.35 333.78h1.2v1.2h-1.2z M664.35 341.57h1.2v1.2h-1.2z M664.35 349.35h1.2v1.2h-1.2z M664.35 357.14h1.2v1.2h-1.2z M664.35 364.92h1.2v1.2h-1.2z M664.35 372.70h1.2v1.2h-1.2z M664.35 380.49h1.2v1.2h-1.2z M664.35 388.27h1.2v1.2h-1.2z M664.35 396.06h1.2v1.2h-1.2z M664.35 403.84h1.2v1.2h-1.2z M664.35 411.62h1.2v1.2h-1.2z M664.35 419.41h1.2v1.2h-1.2z M664.35 427.19h1.2v1.2h-1.2z M664.35 434.98h1.2v1.2h-1.2z M664.35 442.76h1.2v1.2h-1.2z M664.35 450.54h1.2v1.2h-1.2z M664.35 458.33h1.2v1.2h-1.2z M664.35 466.11h1.2v1.2h-1.2z M664.35 473.90h1.2v1.2h-1.2z M664.35 481.68h1.2v1.2h-1.2z M664.35 489.46h1.2v1.2h-1.2z M664.35 497.25h1.2v1.2h-1.2z M664.35 505.03h1.2v1.2h-1.2z M664.35 512.82h1.2v1.2h-1.2z" fill="#262626"/>
<path d="M40.35 170.32h1.2v1.2h-1.2z M50.10 170.32h1.2v1.2h-1.2z M59.85 170.32h1.2v1.2h-1.2z M69.60 170.32h1.2v1.2h-1.2z M79.35 170.32h1.2v1.2h-1.2z M89.10 170.32h1.2v1.2h-1.2z M98.85 170.32h1.2v1.2h-1.2z M108.60 170.32h1.2v1.2h-1.2z M118.35 170.32h1.2v1.2h-1.2z M128.10 170.32h1.2v1.2h-1.2z M137.85 170.32h1.2v1.2h-1.2z M147.60 170.32h1.2v1.2h-1.2z M157.35 170.32h1.2v1.2h-1.2z M167.10 170.32h1.2v1.2h-1.2z M176.85 170.32h1.2v1.2h-1.2z M186.60 170.32h1.2v1.2h-1.2z M196.35 170.32h1.2v1.2h-1.2z M206.10 170.32h1.2v1.2h-1.2z M215.85 170.32h1.2v1.2h-1.2z M225.60 170.32h1.2v1.2h-1.2z M235.35 170.32h1.2v1.2h-1.2z M245.10 170.32h1.2v1.2h-1.2z M254.85 170.32h1.2v1.2h-1.2z M264.60 170.32h1.2v1.2h-1.2z M274.35 170.32h1.2v1.2h-1.2z M284.10 170.32h1.2v1.2h-1.2z M293.85 170.32h1.2v1.2h-1.2z M303.60 170.32h1.2v1.2h-1.2z M313.35 170.32h1.2v1.2h-1.2z M323.10 170.32h1.2v1.2h-1.2z M332.85 170.32h1.2v1.2h-1.2z M342.60 170.32h1.2v1.2h-1.2z M352.35 170.32h1.2v1.2h-1.2z M362.10 170.32h1.2v1.2h-1.2z M371.85 170.32h1.2v1.2h-1.2z M381.60 170.32h1.2v1.2h-1.2z M391.35 170.32h1.2v1.2h-1.2z M401.10 170.32h1.2v1.2h-1.2z M410.85 170.32h1.2v1.2h-1.2z M420.60 170.32h1.2v1.2h-1.2z M430.35 170.32h1.2v1.2h-1.2z M440.10 170.32h1.2v1.2h-1.2z M449.85 170.32h1.2v1.2h-1.2z M459.60 170.32h1.2v1.2h-1.2z M469.35 170.32h1.2v1.2h-1.2z M479.10 170.32h1.2v1.2h-1.2z M488.85 170.32h1.2v1.2h-1.2z M498.60 170.32h1.2v1.2h-1.2z M508.35 170.32h1.2v1.2h-1.2z M518.10 170.32h1.2v1.2h-1.2z M527.85 170.32h1.2v1.2h-1.2z M537.60 170.32h1.2v1.2h-1.2z M547.35 170.32h1.2v1.2h-1.2z M557.10 170.32h1.2v1.2h-1.2z M566.85 170.32h1.2v1.2h-1.2z M576.60 170.32h1.2v1.2h-1.2z M586.35 170.32h1.2v1.2h-1.2z M596.10 170.32h1.2v1.2h-1.2z M605.85 170.32h1.2v1.2h-1.2z M615.60 170.32h1.2v1.2h-1.2z M625.35 170.32h1.2v1.2h-1.2z M635.10 170.32h1.2v1.2h-1.2z M644.85 170.32h1.2v1.2h-1.2z M654.60 170.32h1.2v1.2h-1.2z M664.35 170.32h1.2v1.2h-1.2z M674.10 170.32h1.2v1.2h-1.2z M683.85 170.32h1.2v1.2h-1.2z M693.60 170.32h1.2v1.2h-1.2z M703.35 170.32h1.2v1.2h-1.2z" fill="#262626"/>
<path d="M40.35 209.24h1.2v1.2h-1.2z M50.10 209.24h1.2v1.2h-1.2z M59.85 209.24h1.2v1.2h-1.2z M69.60 209.24h1.2v1.2h-1.2z M79.35 209.24h1.2v1.2h-1.2z M89.10 209.24h1.2v1.2h-1.2z M98.85 209.24h1.2v1.2h-1.2z M108.60 209.24h1.2v1.2h-1.2z M118.35 209.24h1.2v1.2h-1.2z M128.10 209.24h1.2v1.2h-1.2z M137.85 209.24h1.2v1.2h-1.2z M147.60 209.24h1.2v1.2h-1.2z M157.35 209.24h1.2v1.2h-1.2z M167.10 209.24h1.2v1.2h-1.2z M176.85 209.24h1.2v1.2h-1.2z M186.60 209.24h1.2v1.2h-1.2z M196.35 209.24h1.2v1.2h-1.2z M206.10 209.24h1.2v1.2h-1.2z M215.85 209.24h1.2v1.2h-1.2z M225.60 209.24h1.2v1.2h-1.2z M235.35 209.24h1.2v1.2h-1.2z M245.10 209.24h1.2v1.2h-1.2z M254.85 209.24h1.2v1.2h-1.2z M264.60 209.24h1.2v1.2h-1.2z M274.35 209.24h1.2v1.2h-1.2z M284.10 209.24h1.2v1.2h-1.2z M293.85 209.24h1.2v1.2h-1.2z M303.60 209.24h1.2v1.2h-1.2z M313.35 209.24h1.2v1.2h-1.2z M323.10 209.24h1.2v1.2h-1.2z M332.85 209.24h1.2v1.2h-1.2z M342.60 209.24h1.2v1.2h-1.2z M352.35 209.24h1.2v1.2h-1.2z M362.10 209.24h1.2v1.2h-1.2z M371.85 209.24h1.2v1.2h-1.2z M381.60 209.24h1.2v1.2h-1.2z M391.35 209.24h1.2v1.2h-1.2z M401.10 209.24h1.2v1.2h-1.2z M410.85 209.24h1.2v1.2h-1.2z M420.60 209.24h1.2v1.2h-1.2z M430.35 209.24h1.2v1.2h-1.2z M440.10 209.24h1.2v1.2h-1.2z M449.85 209.24h1.2v1.2h-1.2z M459.60 209.24h1.2v1.2h-1.2z M469.35 209.24h1.2v1.2h-1.2z M479.10 209.24h1.2v1.2h-1.2z M488.85 209.24h1.2v1.2h-1.2z M498.60 209.24h1.2v1.2h-1.2z M508.35 209.24h1.2v1.2h-1.2z M518.10 209.24h1.2v1.2h-1.2z M527.85 209.24h1.2v1.2h-1.2z M537.60 209.24h1.2v1.2h-1.2z M547.35 209.24h1.2v1.2h-1.2z M557.10 209.24h1.2v1.2h-1.2z M566.85 209.24h1.2v1.2h-1.2z M576.60 209.24h1.2v1.2h-1.2z M586.35 209.24h1.2v1.2h-1.2z M596.10 209.24h1.2v1.2h-1.2z M605.85 209.24h1.2v1.2h-1.2z M615.60 209.24h1.2v1.2h-1.2z M625.35 209.24h1.2v1.2h-1.2z M635.10 209.24h1.2v1.2h-1.2z M644.85 209.24h1.2v1.2h-1.2z M654.60 209.24h1.2v1.2h-1.2z M664.35 209.24h1.2v1.2h-1.2z M674.10 209.24h1.2v1.2h-1.2z M683.85 209.24h1.2v1.2h-1.2z M693.60 209.24h1.2v1.2h-1.2z M703.35 209.24h1.2v1.2h-1.2z" fill="#262626"/>
<path d="M40.35 248.16h1.2v1.2h-1.2z M50.10 248.16h1.2v1.2h-1.2z M59.85 248.16h1.2v1.2h-1.2z M69.60 248.16h1.2v1.2h-1.2z M79.35 248.16h1.2v1.2h-1.2z M89.10 248.16h1.2v1.2h-1.2z M98.85 248.16h1.2v1.2h-1.2z M108.60 248.16h1.2v1.2h-1.2z M118.35 248.16h1.2v1.2h-1.2z M128.10 248.16h1.2v1.2h-1.2z M137.85 248.16h1.2v1.2h-1.2z M147.60 248.16h1.2v1.2h-1.2z M157.35 248.16h1.2v1.2h-1.2z M167.10 248.16h1.2v1.2h-1.2z M176.85 248.16h1.2v1.2h-1.2z M186.60 248.16h1.2v1.2h-1.2z M196.35 248.16h1.2v1.2h-1.2z M206.10 248.16h1.2v1.2h-1.2z M215.85 248.16h1.2v1.2h-1.2z M225.60 248.16h1.2v1.2h-1.2z M235.35 248.16h1.2v1.2h-1.2z M245.10 248.16h1.2v1.2h-1.2z M254.85 248.16h1.2v1.2h-1.2z M264.60 248.16h1.2v1.2h-1.2z M274.35 248.16h1.2v1.2h-1.2z M284.10 248.16h1.2v1.2h-1.2z M293.85 248.16h1.2v1.2h-1.2z M303.60 248.16h1.2v1.2h-1.2z M313.35 248.16h1.2v1.2h-1.2z M323.10 248.16h1.2v1.2h-1.2z M332.85 248.16h1.2v1.2h-1.2z M342.60 248.16h1.2v1.2h-1.2z M352.35 248.16h1.2v1.2h-1.2z M362.10 248.16h1.2v1.2h-1.2z M371.85 248.16h1.2v1.2h-1.2z M381.60 248.16h1.2v1.2h-1.2z M391.35 248.16h1.2v1.2h-1.2z M401.10 248.16h1.2v1.2h-1.2z M410.85 248.16h1.2v1.2h-1.2z M420.60 248.16h1.2v1.2h-1.2z M430.35 248.16h1.2v1.2h-1.2z M440.10 248.16h1.2v1.2h-1.2z M449.85 248.16h1.2v1.2h-1.2z M459.60 248.16h1.2v1.2h-1.2z M469.35 248.16h1.2v1.2h-1.2z M479.10 248.16h1.2v1.2h-1.2z M488.85 248.16h1.2v1.2h-1.2z M498.60 248.16h1.2v1.2h-1.2z M508.35 248.16h1.2v1.2h-1.2z M518.10 248.16h1.2v1.2h-1.2z M527.85 248.16h1.2v1.2h-1.2z M537.60 248.16h1.2v1.2h-1.2z M547.35 248.16h1.2v1.2h-1.2z M557.10 248.16h1.2v1.2h-1.2z M566.85 248.16h1.2v1.2h-1.2z M576.60 248.16h1.2v1.2h-1.2z M586.35 248.16h1.2v1.2h-1.2z M596.10 248.16h1.2v1.2h-1.2z M605.85 248.16h1.2v1.2h-1.2z M615.60 248.16h1.2v1.2h-1.2z M625.35 248.16h1.2v1.2h-1.2z M635.10 248.16h1.2v1.2h-1.2z M644.85 248.16h1.2v1.2h-1.2z M654.60 248.16h1.2v1.2h-1.2z M664.35 248.16h1.2v1.2h-1.2z M674.10 248.16h1.2v1.2h-1.2z M683.85 248.16h1.2v1.2h-1.2z M693.60 248.16h1.2v1.2h-1.2z M703.35 248.16h1.2v1.2h-1.2z" fill="#262626"/>
<path d="M40.35 287.08h1.2v1.2h-1.2z M50.10 287.08h1.2v1.2h-1.2z M59.85 287.08h1.2v1.2h-1.2z M69.60 287.08h1.2v1.2h-1.2z M79.35 287.08h1.2v1.2h-1.2z M89.10 287.08h1.2v1.2h-1.2z M98.85 287.08h1.2v1.2h-1.2z M108.60 287.08h1.2v1.2h-1.2z M118.35 287.08h1.2v1.2h-1.2z M128.10 287.08h1.2v1.2h-1.2z M137.85 287.08h1.2v1.2h-1.2z M147.60 287.08h1.2v1.2h-1.2z M157.35 287.08h1.2v1.2h-1.2z M167.10 287.08h1.2v1.2h-1.2z M176.85 287.08h1.2v1.2h-1.2z M186.60 287.08h1.2v1.2h-1.2z M196.35 287.08h1.2v1.2h-1.2z M206.10 287.08h1.2v1.2h-1.2z M215.85 287.08h1.2v1.2h-1.2z M225.60 287.08h1.2v1.2h-1.2z M235.35 287.08h1.2v1.2h-1.2z M245.10 287.08h1.2v1.2h-1.2z M254.85 287.08h1.2v1.2h-1.2z M264.60 287.08h1.2v1.2h-1.2z M274.35 287.08h1.2v1.2h-1.2z M284.10 287.08h1.2v1.2h-1.2z M293.85 287.08h1.2v1.2h-1.2z M303.60 287.08h1.2v1.2h-1.2z M313.35 287.08h1.2v1.2h-1.2z M323.10 287.08h1.2v1.2h-1.2z M332.85 287.08h1.2v1.2h-1.2z M342.60 287.08h1.2v1.2h-1.2z M352.35 287.08h1.2v1.2h-1.2z M362.10 287.08h1.2v1.2h-1.2z M371.85 287.08h1.2v1.2h-1.2z M381.60 287.08h1.2v1.2h-1.2z M391.35 287.08h1.2v1.2h-1.2z M401.10 287.08h1.2v1.2h-1.2z M410.85 287.08h1.2v1.2h-1.2z M420.60 287.08h1.2v1.2h-1.2z M430.35 287.08h1.2v1.2h-1.2z M440.10 287.08h1.2v1.2h-1.2z M449.85 287.08h1.2v1.2h-1.2z M459.60 287.08h1.2v1.2h-1.2z M469.35 287.08h1.2v1.2h-1.2z M479.10 287.08h1.2v1.2h-1.2z M488.85 287.08h1.2v1.2h-1.2z M498.60 287.08h1.2v1.2h-1.2z M508.35 287.08h1.2v1.2h-1.2z M518.10 287.08h1.2v1.2h-1.2z M527.85 287.08h1.2v1.2h-1.2z M537.60 287.08h1.2v1.2h-1.2z M547.35 287.08h1.2v1.2h-1.2z M557.10 287.08h1.2v1.2h-1.2z M566.85 287.08h1.2v1.2h-1.2z M576.60 287.08h1.2v1.2h-1.2z M586.35 287.08h1.2v1.2h-1.2z M596.10 287.08h1.2v1.2h-1.2z M605.85 287.08h1.2v1.2h-1.2z M615.60 287.08h1.2v1.2h-1.2z M625.35 287.08h1.2v1.2h-1.2z M635.10 287.08h1.2v1.2h-1.2z M644.85 287.08h1.2v1.2h-1.2z M654.60 287.08h1.2v1.2h-1.2z M664.35 287.08h1.2v1.2h-1.2z M674.10 287.08h1.2v1.2h-1.2z M683.85 287.08h1.2v1.2h-1.2z M693.60 287.08h1.2v1.2h-1.2z M703.35 287.08h1.2v1.2h-1.2z" fill="#262626"/>
<path d="M40.35 326.00h1.2v1.2h-1.2z M50.10 326.00h1.2v1.2h-1.2z M59.85 326.00h1.2v1.2h-1.2z M69.60 326.00h1.2v1.2h-1.2z M79.35 326.00h1.2v1.2h-1.2z M89.10 326.00h1.2v1.2h-1.2z M98.85 326.00h1.2v1.2h-1.2z M108.60 326.00h1.2v1.2h-1.2z M118.35 326.00h1.2v1.2h-1.2z M128.10 326.00h1.2v1.2h-1.2z M137.85 326.00h1.2v1.2h-1.2z M147.60 326.00h1.2v1.2h-1.2z M157.35 326.00h1.2v1.2h-1.2z M167.10 326.00h1.2v1.2h-1.2z M176.85 326.00h1.2v1.2h-1.2z M186.60 326.00h1.2v1.2h-1.2z M196.35 326.00h1.2v1.2h-1.2z M206.10 326.00h1.2v1.2h-1.2z M215.85 326.00h1.2v1.2h-1.2z M225.60 326.00h1.2v1.2h-1.2z M235.35 326.00h1.2v1.2h-1.2z M245.10 326.00h1.2v1.2h-1.2z M254.85 326.00h1.2v1.2h-1.2z M264.60 326.00h1.2v1.2h-1.2z M274.35 326.00h1.2v1.2h-1.2z M284.10 326.00h1.2v1.2h-1.2z M293.85 326.00h1.2v1.2h-1.2z M303.60 326.00h1.2v1.2h-1.2z M313.35 326.00h1.2v1.2h-1.2z M323.10 326.00h1.2v1.2h-1.2z M332.85 326.00h1.2v1.2h-1.2z M342.60 326.00h1.2v1.2h-1.2z M352.35 326.00h1.2v1.2h-1.2z M362.10 326.00h1.2v1.2h-1.2z M371.85 326.00h1.2v1.2h-1.2z M381.60 326.00h1.2v1.2h-1.2z M391.35 326.00h1.2v1.2h-1.2z M401.10 326.00h1.2v1.2h-1.2z M410.85 326.00h1.2v1.2h-1.2z M420.60 326.00h1.2v1.2h-1.2z M430.35 326.00h1.2v1.2h-1.2z M440.10 326.00h1.2v1.2h-1.2z M449.85 326.00h1.2v1.2h-1.2z M459.60 326.00h1.2v1.2h-1.2z M469.35 326.00h1.2v1.2h-1.2z M479.10 326.00h1.2v1.2h-1.2z M488.85 326.00h1.2v1.2h-1.2z M498.60 326.00h1.2v1.2h-1.2z M508.35 326.00h1.2v1.2h-1.2z M518.10 326.00h1.2v1.2h-1.2z M527.85 326.00h1.2v1.2h-1.2z M537.60 326.00h1.2v1.2h-1.2z M547.35 326.00h1.2v1.2h-1.2z M557.10 326.00h1.2v1.2h-1.2z M566.85 326.00h1.2v1.2h-1.2z M576.60 326.00h1.2v1.2h-1.2z M586.35 326.00h1.2v1.2h-1.2z M596.10 326.00h1.2v1.2h-1.2z M605.85 326.00h1.2v1.2h-1.2z M615.60 326.00h1.2v1.2h-1.2z M625.35 326.00h1.2v1.2h-1.2z M635.10 326.00h1.2v1.2h-1.2z M644.85 326.00h1.2v1.2h-1.2z M654.60 326.00h1.2v1.2h-1.2z M664.35 326.00h1.2v1.2h-1.2z M674.10 326.00h1.2v1.2h-1.2z M683.85 326.00h1.2v1.2h-1.2z M693.60 326.00h1.2v1.2h-1.2z M703.35 326.00h1.2v1.2h-1.2z" fill="#262626"/>
<path d="M40.35 364.92h1.2v1.2h-1.2z M50.10 364.92h1.2v1.2h-1.2z M59.85 364.92h1.2v1.2h-1.2z M69.60 364.92h1.2v1.2h-1.2z M79.35 364.92h1.2v1.2h-1.2z M89.10 364.92h1.2v1.2h-1.2z M98.85 364.92h1.2v1.2h-1.2z M108.60 364.92h1.2v1.2h-1.2z M118.35 364.92h1.2v1.2h-1.2z M128.10 364.92h1.2v1.2h-1.2z M137.85 364.92h1.2v1.2h-1.2z M147.60 364.92h1.2v1.2h-1.2z M157.35 364.92h1.2v1.2h-1.2z M167.10 364.92h1.2v1.2h-1.2z M176.85 364.92h1.2v1.2h-1.2z M186.60 364.92h1.2v1.2h-1.2z M196.35 364.92h1.2v1.2h-1.2z M206.10 364.92h1.2v1.2h-1.2z M215.85 364.92h1.2v1.2h-1.2z M225.60 364.92h1.2v1.2h-1.2z M235.35 364.92h1.2v1.2h-1.2z M245.10 364.92h1.2v1.2h-1.2z M254.85 364.92h1.2v1.2h-1.2z M264.60 364.92h1.2v1.2h-1.2z M274.35 364.92h1.2v1.2h-1.2z M284.10 364.92h1.2v1.2h-1.2z M293.85 364.92h1.2v1.2h-1.2z M303.60 364.92h1.2v1.2h-1.2z M313.35 364.92h1.2v1.2h-1.2z M323.10 364.92h1.2v1.2h-1.2z M332.85 364.92h1.2v1.2h-1.2z M342.60 364.92h1.2v1.2h-1.2z M352.35 364.92h1.2v1.2h-1.2z M362.10 364.92h1.2v1.2h-1.2z M371.85 364.92h1.2v1.2h-1.2z M381.60 364.92h1.2v1.2h-1.2z M391.35 364.92h1.2v1.2h-1.2z M401.10 364.92h1.2v1.2h-1.2z M410.85 364.92h1.2v1.2h-1.2z M420.60 364.92h1.2v1.2h-1.2z M430.35 364.92h1.2v1.2h-1.2z M440.10 364.92h1.2v1.2h-1.2z M449.85 364.92h1.2v1.2h-1.2z M459.60 364.92h1.2v1.2h-1.2z M469.35 364.92h1.2v1.2h-1.2z M479.10 364.92h1.2v1.2h-1.2z M488.85 364.92h1.2v1.2h-1.2z M498.60 364.92h1.2v1.2h-1.2z M508.35 364.92h1.2v1.2h-1.2z M518.10 364.92h1.2v1.2h-1.2z M527.85 364.92h1.2v1.2h-1.2z M537.60 364.92h1.2v1.2h-1.2z M547.35 364.92h1.2v1.2h-1.2z M557.10 364.92h1.2v1.2h-1.2z M566.85 364.92h1.2v1.2h-1.2z M576.60 364.92h1.2v1.2h-1.2z M586.35 364.92h1.2v1.2h-1.2z M596.10 364.92h1.2v1.2h-1.2z M605.85 364.92h1.2v1.2h-1.2z M615.60 364.92h1.2v1.2h-1.2z M625.35 364.92h1.2v1.2h-1.2z M635.10 364.92h1.2v1.2h-1.2z M644.85 364.92h1.2v1.2h-1.2z M654.60 364.92h1.2v1.2h-1.2z M664.35 364.92h1.2v1.2h-1.2z M674.10 364.92h1.2v1.2h-1.2z M683.85 364.92h1.2v1.2h-1.2z M693.60 364.92h1.2v1.2h-1.2z M703.35 364.92h1.2v1.2h-1.2z" fill="#262626"/>
<path d="M40.35 403.84h1.2v1.2h-1.2z M50.10 403.84h1.2v1.2h-1.2z M59.85 403.84h1.2v1.2h-1.2z M69.60 403.84h1.2v1.2h-1.2z M79.35 403.84h1.2v1.2h-1.2z M89.10 403.84h1.2v1.2h-1.2z M98.85 403.84h1.2v1.2h-1.2z M108.60 403.84h1.2v1.2h-1.2z M118.35 403.84h1.2v1.2h-1.2z M128.10 403.84h1.2v1.2h-1.2z M137.85 403.84h1.2v1.2h-1.2z M147.60 403.84h1.2v1.2h-1.2z M157.35 403.84h1.2v1.2h-1.2z M167.10 403.84h1.2v1.2h-1.2z M176.85 403.84h1.2v1.2h-1.2z M186.60 403.84h1.2v1.2h-1.2z M196.35 403.84h1.2v1.2h-1.2z M206.10 403.84h1.2v1.2h-1.2z M215.85 403.84h1.2v1.2h-1.2z M225.60 403.84h1.2v1.2h-1.2z M235.35 403.84h1.2v1.2h-1.2z M245.10 403.84h1.2v1.2h-1.2z M254.85 403.84h1.2v1.2h-1.2z M264.60 403.84h1.2v1.2h-1.2z M274.35 403.84h1.2v1.2h-1.2z M284.10 403.84h1.2v1.2h-1.2z M293.85 403.84h1.2v1.2h-1.2z M303.60 403.84h1.2v1.2h-1.2z M313.35 403.84h1.2v1.2h-1.2z M323.10 403.84h1.2v1.2h-1.2z M332.85 403.84h1.2v1.2h-1.2z M342.60 403.84h1.2v1.2h-1.2z M352.35 403.84h1.2v1.2h-1.2z M362.10 403.84h1.2v1.2h-1.2z M371.85 403.84h1.2v1.2h-1.2z M381.60 403.84h1.2v1.2h-1.2z M391.35 403.84h1.2v1.2h-1.2z M401.10 403.84h1.2v1.2h-1.2z M410.85 403.84h1.2v1.2h-1.2z M420.60 403.84h1.2v1.2h-1.2z M430.35 403.84h1.2v1.2h-1.2z M440.10 403.84h1.2v1.2h-1.2z M449.85 403.84h1.2v1.2h-1.2z M459.60 403.84h1.2v1.2h-1.2z M469.35 403.84h1.2v1.2h-1.2z M479.10 403.84h1.2v1.2h-1.2z M488.85 403.84h1.2v1.2h-1.2z M498.60 403.84h1.2v1.2h-1.2z M508.35 403.84h1.2v1.2h-1.2z M518.10 403.84h1.2v1.2h-1.2z M527.85 403.84h1.2v1.2h-1.2z M537.60 403.84h1.2v1.2h-1.2z M547.35 403.84h1.2v1.2h-1.2z M557.10 403.84h1.2v1.2h-1.2z M566.85 403.84h1.2v1.2h-1.2z M576.60 403.84h1.2v1.2h-1.2z M586.35 403.84h1.2v1.2h-1.2z M596.10 403.84h1.2v1.2h-1.2z M605.85 403.84h1.2v1.2h-1.2z M615.60 403.84h1.2v1.2h-1.2z M625.35 403.84h1.2v1.2h-1.2z M635.10 403.84h1.2v1.2h-1.2z M644.85 403.84h1.2v1.2h-1.2z M654.60 403.84h1.2v1.2h-1.2z M664.35 403.84h1.2v1.2h-1.2z M674.10 403.84h1.2v1.2h-1.2z M683.85 403.84h1.2v1.2h-1.2z M693.60 403.84h1.2v1.2h-1.2z M703.35 403.84h1.2v1.2h-1.2z" fill="#262626"/>
<path d="M40.35 442.76h1.2v1.2h-1.2z M50.10 442.76h1.2v1.2h-1.2z M59.85 442.76h1.2v1.2h-1.2z M69.60 442.76h1.2v1.2h-1.2z M79.35 442.76h1.2v1.2h-1.2z M89.10 442.76h1.2v1.2h-1.2z M98.85 442.76h1.2v1.2h-1.2z M108.60 442.76h1.2v1.2h-1.2z M118.35 442.76h1.2v1.2h-1.2z M128.10 442.76h1.2v1.2h-1.2z M137.85 442.76h1.2v1.2h-1.2z M147.60 442.76h1.2v1.2h-1.2z M157.35 442.76h1.2v1.2h-1.2z M167.10 442.76h1.2v1.2h-1.2z M176.85 442.76h1.2v1.2h-1.2z M186.60 442.76h1.2v1.2h-1.2z M196.35 442.76h1.2v1.2h-1.2z M206.10 442.76h1.2v1.2h-1.2z M215.85 442.76h1.2v1.2h-1.2z M225.60 442.76h1.2v1.2h-1.2z M235.35 442.76h1.2v1.2h-1.2z M245.10 442.76h1.2v1.2h-1.2z M254.85 442.76h1.2v1.2h-1.2z M264.60 442.76h1.2v1.2h-1.2z M274.35 442.76h1.2v1.2h-1.2z M284.10 442.76h1.2v1.2h-1.2z M293.85 442.76h1.2v1.2h-1.2z M303.60 442.76h1.2v1.2h-1.2z M313.35 442.76h1.2v1.2h-1.2z M323.10 442.76h1.2v1.2h-1.2z M332.85 442.76h1.2v1.2h-1.2z M342.60 442.76h1.2v1.2h-1.2z M352.35 442.76h1.2v1.2h-1.2z M362.10 442.76h1.2v1.2h-1.2z M371.85 442.76h1.2v1.2h-1.2z M381.60 442.76h1.2v1.2h-1.2z M391.35 442.76h1.2v1.2h-1.2z M401.10 442.76h1.2v1.2h-1.2z M410.85 442.76h1.2v1.2h-1.2z M420.60 442.76h1.2v1.2h-1.2z M430.35 442.76h1.2v1.2h-1.2z M440.10 442.76h1.2v1.2h-1.2z M449.85 442.76h1.2v1.2h-1.2z M459.60 442.76h1.2v1.2h-1.2z M469.35 442.76h1.2v1.2h-1.2z M479.10 442.76h1.2v1.2h-1.2z M488.85 442.76h1.2v1.2h-1.2z M498.60 442.76h1.2v1.2h-1.2z M508.35 442.76h1.2v1.2h-1.2z M518.10 442.76h1.2v1.2h-1.2z M527.85 442.76h1.2v1.2h-1.2z M537.60 442.76h1.2v1.2h-1.2z M547.35 442.76h1.2v1.2h-1.2z M557.10 442.76h1.2v1.2h-1.2z M566.85 442.76h1.2v1.2h-1.2z M576.60 442.76h1.2v1.2h-1.2z M586.35 442.76h1.2v1.2h-1.2z M596.10 442.76h1.2v1.2h-1.2z M605.85 442.76h1.2v1.2h-1.2z M615.60 442.76h1.2v1.2h-1.2z M625.35 442.76h1.2v1.2h-1.2z M635.10 442.76h1.2v1.2h-1.2z M644.85 442.76h1.2v1.2h-1.2z M654.60 442.76h1.2v1.2h-1.2z M664.35 442.76h1.2v1.2h-1.2z M674.10 442.76h1.2v1.2h-1.2z M683.85 442.76h1.2v1.2h-1.2z M693.60 442.76h1.2v1.2h-1.2z M703.35 442.76h1.2v1.2h-1.2z" fill="#262626"/>
<path d="M40.35 481.68h1.2v1.2h-1.2z M50.10 481.68h1.2v1.2h-1.2z M59.85 481.68h1.2v1.2h-1.2z M69.60 481.68h1.2v1.2h-1.2z M79.35 481.68h1.2v1.2h-1.2z M89.10 481.68h1.2v1.2h-1.2z M98.85 481.68h1.2v1.2h-1.2z M108.60 481.68h1.2v1.2h-1.2z M118.35 481.68h1.2v1.2h-1.2z M128.10 481.68h1.2v1.2h-1.2z M137.85 481.68h1.2v1.2h-1.2z M147.60 481.68h1.2v1.2h-1.2z M157.35 481.68h1.2v1.2h-1.2z M167.10 481.68h1.2v1.2h-1.2z M176.85 481.68h1.2v1.2h-1.2z M186.60 481.68h1.2v1.2h-1.2z M196.35 481.68h1.2v1.2h-1.2z M206.10 481.68h1.2v1.2h-1.2z M215.85 481.68h1.2v1.2h-1.2z M225.60 481.68h1.2v1.2h-1.2z M235.35 481.68h1.2v1.2h-1.2z M245.10 481.68h1.2v1.2h-1.2z M254.85 481.68h1.2v1.2h-1.2z M264.60 481.68h1.2v1.2h-1.2z M274.35 481.68h1.2v1.2h-1.2z M284.10 481.68h1.2v1.2h-1.2z M293.85 481.68h1.2v1.2h-1.2z M303.60 481.68h1.2v1.2h-1.2z M313.35 481.68h1.2v1.2h-1.2z M323.10 481.68h1.2v1.2h-1.2z M332.85 481.68h1.2v1.2h-1.2z M342.60 481.68h1.2v1.2h-1.2z M352.35 481.68h1.2v1.2h-1.2z M362.10 481.68h1.2v1.2h-1.2z M371.85 481.68h1.2v1.2h-1.2z M381.60 481.68h1.2v1.2h-1.2z M391.35 481.68h1.2v1.2h-1.2z M401.10 481.68h1.2v1.2h-1.2z M410.85 481.68h1.2v1.2h-1.2z M420.60 481.68h1.2v1.2h-1.2z M430.35 481.68h1.2v1.2h-1.2z M440.10 481.68h1.2v1.2h-1.2z M449.85 481.68h1.2v1.2h-1.2z M459.60 481.68h1.2v1.2h-1.2z M469.35 481.68h1.2v1.2h-1.2z M479.10 481.68h1.2v1.2h-1.2z M488.85 481.68h1.2v1.2h-1.2z M498.60 481.68h1.2v1.2h-1.2z M508.35 481.68h1.2v1.2h-1.2z M518.10 481.68h1.2v1.2h-1.2z M527.85 481.68h1.2v1.2h-1.2z M537.60 481.68h1.2v1.2h-1.2z M547.35 481.68h1.2v1.2h-1.2z M557.10 481.68h1.2v1.2h-1.2z M566.85 481.68h1.2v1.2h-1.2z M576.60 481.68h1.2v1.2h-1.2z M586.35 481.68h1.2v1.2h-1.2z M596.10 481.68h1.2v1.2h-1.2z M605.85 481.68h1.2v1.2h-1.2z M615.60 481.68h1.2v1.2h-1.2z M625.35 481.68h1.2v1.2h-1.2z M635.10 481.68h1.2v1.2h-1.2z M644.85 481.68h1.2v1.2h-1.2z M654.60 481.68h1.2v1.2h-1.2z M664.35 481.68h1.2v1.2h-1.2z M674.10 481.68h1.2v1.2h-1.2z M683.85 481.68h1.2v1.2h-1.2z M693.60 481.68h1.2v1.2h-1.2z M703.35 481.68h1.2v1.2h-1.2z" fill="#262626"/>
<line x1="31.2" y1="326.60" x2="713.7" y2="326.60" stroke="#232323" stroke-width="1" stroke-dasharray="1 1"/>
<line x1="372.45" y1="132.0" x2="372.45" y2="521.2" stroke="#232323" stroke-width="1" stroke-dasharray="1 1"/>
<path d="M40.95 324.60v4 M50.70 324.60v4 M60.45 324.60v4 M70.20 324.60v4 M79.95 324.60v4 M89.70 324.60v4 M99.45 324.60v4 M109.20 324.60v4 M118.95 324.60v4 M128.70 324.60v4 M138.45 324.60v4 M148.20 324.60v4 M157.95 324.60v4 M167.70 324.60v4 M177.45 324.60v4 M187.20 324.60v4 M196.95 324.60v4 M206.70 324.60v4 M216.45 324.60v4 M226.20 324.60v4 M235.95 324.60v4 M245.70 324.60v4 M255.45 324.60v4 M265.20 324.60v4 M274.95 324.60v4 M284.70 324.60v4 M294.45 324.60v4 M304.20 324.60v4 M313.95 324.60v4 M323.70 324.60v4 M333.45 324.60v4 M343.20 324.60v4 M352.95 324.60v4 M362.70 324.60v4 M372.45 324.60v4 M382.20 324.60v4 M391.95 324.60v4 M401.70 324.60v4 M411.45 324.60v4 M421.20 324.60v4 M430.95 324.60v4 M440.70 324.60v4 M450.45 324.60v4 M460.20 324.60v4 M469.95 324.60v4 M479.70 324.60v4 M489.45 324.60v4 M499.20 324.60v4 M508.95 324.60v4 M518.70 324.60v4 M528.45 324.60v4 M538.20 324.60v4 M547.95 324.60v4 M557.70 324.60v4 M567.45 324.60v4 M577.20 324.60v4 M586.95 324.60v4 M596.70 324.60v4 M606.45 324.60v4 M616.20 324.60v4 M625.95 324.60v4 M635.70 324.60v4 M645.45 324.60v4 M655.20 324.60v4 M664.95 324.60v4 M674.70 324.60v4 M684.45 324.60v4 M694.20 324.60v4 M703.95 324.60v4 M370.45 139.78h4 M370.45 147.57h4 M370.45 155.35h4 M370.45 163.14h4 M370.45 170.92h4 M370.45 178.70h4 M370.45 186.49h4 M370.45 194.27h4 M370.45 202.06h4 M370.45 209.84h4 M370.45 217.62h4 M370.45 225.41h4 M370.45 233.19h4 M370.45 240.98h4 M370.45 248.76h4 M370.45 256.54h4 M370.45 264.33h4 M370.45 272.11h4 M370.45 279.90h4 M370.45 287.68h4 M370.45 295.46h4 M370.45 303.25h4 M370.45 311.03h4 M370.45 318.82h4 M370.45 326.60h4 M370.45 334.38h4 M370.45 342.17h4 M370.45 349.95h4 M370.45 357.74h4 M370.45 365.52h4 M370.45 373.30h4 M370.45 381.09h4 M370.45 388.87h4 M370.45 396.66h4 M370.45 404.44h4 M370.45 412.22h4 M370.45 420.01h4 M370.45 427.79h4 M370.45 435.58h4 M370.45 443.36h4 M370.45 451.14h4 M370.45 458.93h4 M370.45 466.71h4 M370.45 474.50h4 M370.45 482.28h4 M370.45 490.06h4 M370.45 497.85h4 M370.45 505.63h4 M370.45 513.42h4" stroke="#262626" stroke-width="1"/>
<polyline fill="none" stroke="#d8d42a" stroke-width="1.7" stroke-linejoin="round" points="31.20,397.51 31.95,399.66 32.70,401.59 33.45,403.28 34.20,404.73 34.95,405.93 35.70,406.88 36.45,407.57 37.20,408.01 37.95,408.19 38.70,408.12 39.45,407.78 40.20,407.19 40.95,406.34 41.70,405.24 42.45,403.89 43.20,402.29 43.95,400.46 44.70,398.40 45.45,396.11 46.20,393.62 46.95,390.91 47.70,388.01 48.45,384.92 49.20,381.66 49.95,378.24 50.70,374.66 51.45,370.95 52.20,367.12 52.95,363.18 53.70,359.14 54.45,355.02 55.20,350.84 55.95,346.61 56.70,342.34 57.45,338.06 58.20,333.77 58.95,329.49 59.70,325.25 60.45,321.04 61.20,316.90 61.95,312.83 62.70,308.85 63.45,304.97 64.20,301.21 64.95,297.58 65.70,294.09 66.45,290.76 67.20,287.61 67.95,284.63 68.70,281.84 69.45,279.26 70.20,276.89 70.95,274.74 71.70,272.81 72.45,271.12 73.20,269.67 73.95,268.47 74.70,267.52 75.45,266.83 76.20,266.39 76.95,266.21 77.70,266.28 78.45,266.62 79.20,267.21 79.95,268.06 80.70,269.16 81.45,270.51 82.20,272.11 82.95,273.94 83.70,276.00 84.45,278.29 85.20,280.78 85.95,283.49 86.70,286.39 87.45,289.48 88.20,292.74 88.95,296.16 89.70,299.74 90.45,303.45 91.20,307.28 91.95,311.22 92.70,315.26 93.45,319.38 94.20,323.56 94.95,327.79 95.70,332.06 96.45,336.34 97.20,340.63 97.95,344.91 98.70,349.15 99.45,353.36 100.20,357.50 100.95,361.57 101.70,365.55 102.45,369.43 103.20,373.19 103.95,376.82 104.70,380.31 105.45,383.64 106.20,386.79 106.95,389.77 107.70,392.56 108.45,395.14 109.20,397.51 109.95,399.66 110.70,401.59 111.45,403.28 112.20,404.73 112.95,405.93 113.70,406.88 114.45,407.57 115.20,408.01 115.95,408.19 116.70,408.12 117.45,407.78 118.20,407.19 118.95,406.34 119.70,405.24 120.45,403.89 121.20,402.29 121.95,400.46 122.70,398.40 123.45,396.11 124.20,393.62 124.95,390.91 125.70,388.01 126.45,384.92 127.20,381.66 127.95,378.24 128.70,374.66 129.45,370.95 130.20,367.12 130.95,363.18 131.70,359.14 132.45,355.02 133.20,350.84 133.95,346.61 134.70,342.34 135.45,338.06 136.20,333.77 136.95,329.49 137.70,325.25 138.45,321.04 139.20,316.90 139.95,312.83 140.70,308.85 141.45,304.97 142.20,301.21 142.95,297.58 143.70,294.09 144.45,290.76 145.20,287.61 145.95,284.63 146.70,281.84 147.45,279.26 148.20,276.89 148.95,274.74 149.70,272.81 150.45,271.12 151.20,269.67 151.95,268.47 152.70,267.52 153.45,266.83 154.20,266.39 154.95,266.21 155.70,266.28 156.45,266.62 157.20,267.21 157.95,268.06 158.70,269.16 159.45,270.51 160.20,272.11 160.95,273.94 161.70,276.00 162.45,278.29 163.20,280.78 163.95,283.49 164.70,286.39 165.45,289.48 166.20,292.74 166.95,296.16 167.70,299.74 168.45,303.45 169.20,307.28 169.95,311.22 170.70,315.26 171.45,319.38 172.20,323.56 172.95,327.79 173.70,332.06 174.45,336.34 175.20,340.63 175.95,344.91 176.70,349.15 177.45,353.36 178.20,357.50 178.95,361.57 179.70,365.55 180.45,369.43 181.20,373.19 181.95,376.82 182.70,380.31 183.45,383.64 184.20,386.79 184.95,389.77 185.70,392.56 186.45,395.14 187.20,397.51 187.95,399.66 188.70,401.59 189.45,403.28 190.20,404.73 190.95,405.93 191.70,406.88 192.45,407.57 193.20,408.01 193.95,408.19 194.70,408.12 195.45,407.78 196.20,407.19 196.95,406.34 197.70,405.24 198.45,403.89 199.20,402.29 199.95,400.46 200.70,398.40 201.45,396.11 202.20,393.62 202.95,390.91 203.70,388.01 204.45,384.92 205.20,381.66 205.95,378.24 206.70,374.66 207.45,370.95 208.20,367.12 208.95,363.18 209.70,359.14 210.45,355.02 211.20,350.84 211.95,346.61 212.70,342.34 213.45,338.06 214.20,333.77 214.95,329.49 215.70,325.25 216.45,321.04 217.20,316.90 217.95,312.83 218.70,308.85 219.45,304.97 220.20,301.21 220.95,297.58 221.70,294.09 222.45,290.76 223.20,287.61 223.95,284.63 224.70,281.84 225.45,279.26 226.20,276.89 226.95,274.74 227.70,272.81 228.45,271.12 229.20,269.67 229.95,268.47 230.70,267.52 231.45,266.83 232.20,266.39 232.95,266.21 233.70,266.28 234.45,266.62 235.20,267.21 235.95,268.06 236.70,269.16 237.45,270.51 238.20,272.11 238.95,273.94 239.70,276.00 240.45,278.29 241.20,280.78 241.95,283.49 242.70,286.39 243.45,289.48 244.20,292.74 244.95,296.16 245.70,299.74 246.45,303.45 247.20,307.28 247.95,311.22 248.70,315.26 249.45,319.38 250.20,323.56 250.95,327.79 251.70,332.06 252.45,336.34 253.20,340.63 253.95,344.91 254.70,349.15 255.45,353.36 256.20,357.50 256.95,361.57 257.70,365.55 258.45,369.43 259.20,373.19 259.95,376.82 260.70,380.31 261.45,383.64 262.20,386.79 262.95,389.77 263.70,392.56 264.45,395.14 265.20,397.51 265.95,399.66 266.70,401.59 267.45,403.28 268.20,404.73 268.95,405.93 269.70,406.88 270.45,407.57 271.20,408.01 271.95,408.19 272.70,408.12 273.45,407.78 274.20,407.19 274.95,406.34 275.70,405.24 276.45,403.89 277.20,402.29 277.95,400.46 278.70,398.40 279.45,396.11 280.20,393.62 280.95,390.91 281.70,388.01 282.45,384.92 283.20,381.66 283.95,378.24 284.70,374.66 285.45,370.95 286.20,367.12 286.95,363.18 287.70,359.14 288.45,355.02 289.20,350.84 289.95,346.61 290.70,342.34 291.45,338.06 292.20,333.77 292.95,329.49 293.70,325.25 294.45,321.04 295.20,316.90 295.95,312.83 296.70,308.85 297.45,304.97 298.20,301.21 298.95,297.58 299.70,294.09 300.45,290.76 301.20,287.61 301.95,284.63 302.70,281.84 303.45,279.26 304.20,276.89 304.95,274.74 305.70,272.81 306.45,271.12 307.20,269.67 307.95,268.47 308.70,267.52 309.45,266.83 310.20,266.39 310.95,266.21 311.70,266.28 312.45,266.62 313.20,267.21 313.95,268.06 314.70,269.16 315.45,270.51 316.20,272.11 316.95,273.94 317.70,276.00 318.45,278.29 319.20,280.78 319.95,283.49 320.70,286.39 321.45,289.48 322.20,292.74 322.95,296.16 323.70,299.74 324.45,303.45 325.20,307.28 325.95,311.22 326.70,315.26 327.45,319.38 328.20,323.56 328.95,327.79 329.70,332.06 330.45,336.34 331.20,340.63 331.95,344.91 332.70,349.15 333.45,353.36 334.20,357.50 334.95,361.57 335.70,365.55 336.45,369.43 337.20,373.19 337.95,376.82 338.70,380.31 339.45,383.64 340.20,386.79 340.95,389.77 341.70,392.56 342.45,395.14 343.20,397.51 343.95,399.66 344.70,401.59 345.45,403.28 346.20,404.73 346.95,405.93 347.70,406.88 348.45,407.57 349.20,408.01 349.95,408.19 350.70,408.12 351.45,407.78 352.20,407.19 352.95,406.34 353.70,405.24 354.45,403.89 355.20,402.29 355.95,400.46 356.70,398.40 357.45,396.11 358.20,393.62 358.95,390.91 359.70,388.01 360.45,384.92 361.20,381.66 361.95,378.24 362.70,374.66 363.45,370.95 364.20,367.12 364.95,363.18 365.70,359.14 366.45,355.02 367.20,350.84 367.95,346.61 368.70,342.34 369.45,338.06 370.20,333.77 370.95,329.49 371.70,325.25 372.45,321.04 373.20,316.90 373.95,312.83 374.70,308.85 375.45,304.97 376.20,301.21 376.95,297.58 377.70,294.09 378.45,290.76 379.20,287.61 379.95,284.63 380.70,281.84 381.45,279.26 382.20,276.89 382.95,274.74 383.70,272.81 384.45,271.12 385.20,269.67 385.95,268.47 386.70,267.52 387.45,266.83 388.20,266.39 388.95,266.21 389.70,266.28 390.45,266.62 391.20,267.21 391.95,268.06 392.70,269.16 393.45,270.51 394.20,272.11 394.95,273.94 395.70,276.00 396.45,278.29 397.20,280.78 397.95,283.49 398.70,286.39 399.45,289.48 400.20,292.74 400.95,296.16 401.70,299.74 402.45,303.45 403.20,307.28 403.95,311.22 404.70,315.26 405.45,319.38 406.20,323.56 406.95,327.79 407.70,332.06 408.45,336.34 409.20,340.63 409.95,344.91 410.70,349.15 411.45,353.36 412.20,357.50 412.95,361.57 413.70,365.55 414.45,369.43 415.20,373.19 415.95,376.82 416.70,380.31 417.45,383.64 418.20,386.79 418.95,389.77 419.70,392.56 420.45,395.14 421.20,397.51 421.95,399.66 422.70,401.59 423.45,403.28 424.20,404.73 424.95,405.93 425.70,406.88 426.45,407.57 427.20,408.01 427.95,408.19 428.70,408.12 429.45,407.78 430.20,407.19 430.95,406.34 431.70,405.24 432.45,403.89 433.20,402.29 433.95,400.46 434.70,398.40 435.45,396.11 436.20,393.62 436.95,390.91 437.70,388.01 438.45,384.92 439.20,381.66 439.95,378.24 440.70,374.66 441.45,370.95 442.20,367.12 442.95,363.18 443.70,359.14 444.45,355.02 445.20,350.84 445.95,346.61 446.70,342.34 447.45,338.06 448.20,333.77 448.95,329.49 449.70,325.25 450.45,321.04 451.20,316.90 451.95,312.83 452.70,308.85 453.45,304.97 454.20,301.21 454.95,297.58 455.70,294.09 456.45,290.76 457.20,287.61 457.95,284.63 458.70,281.84 459.45,279.26 460.20,276.89 460.95,274.74 461.70,272.81 462.45,271.12 463.20,269.67 463.95,268.47 464.70,267.52 465.45,266.83 466.20,266.39 466.95,266.21 467.70,266.28 468.45,266.62 469.20,267.21 469.95,268.06 470.70,269.16 471.45,270.51 472.20,272.11 472.95,273.94 473.70,276.00 474.45,278.29 475.20,280.78 475.95,283.49 476.70,286.39 477.45,289.48 478.20,292.74 478.95,296.16 479.70,299.74 480.45,303.45 481.20,307.28 481.95,311.22 482.70,315.26 483.45,319.38 484.20,323.56 484.95,327.79 485.70,332.06 486.45,336.34 487.20,340.63 487.95,344.91 488.70,349.15 489.45,353.36 490.20,357.50 490.95,361.57 491.70,365.55 492.45,369.43 493.20,373.19 493.95,376.82 494.70,380.31 495.45,383.64 496.20,386.79 496.95,389.77 497.70,392.56 498.45,395.14 499.20,397.51 499.95,399.66 500.70,401.59 501.45,403.28 502.20,404.73 502.95,405.93 503.70,406.88 504.45,407.57 505.20,408.01 505.95,408.19 506.70,408.12 507.45,407.78 508.20,407.19 508.95,406.34 509.70,405.24 510.45,403.89 511.20,402.29 511.95,400.46 512.70,398.40 513.45,396.11 514.20,393.62 514.95,390.91 515.70,388.01 516.45,384.92 517.20,381.66 517.95,378.24 518.70,374.66 519.45,370.95 520.20,367.12 520.95,363.18 521.70,359.14 522.45,355.02 523.20,350.84 523.95,346.61 524.70,342.34 525.45,338.06 526.20,333.77 526.95,329.49 527.70,325.25 528.45,321.04 529.20,316.90 529.95,312.83 530.70,308.85 531.45,304.97 532.20,301.21 532.95,297.58 533.70,294.09 534.45,290.76 535.20,287.61 535.95,284.63 536.70,281.84 537.45,279.26 538.20,276.89 538.95,274.74 539.70,272.81 540.45,271.12 541.20,269.67 541.95,268.47 542.70,267.52 543.45,266.83 544.20,266.39 544.95,266.21 545.70,266.28 546.45,266.62 547.20,267.21 547.95,268.06 548.70,269.16 549.45,270.51 550.20,272.11 550.95,273.94 551.70,276.00 552.45,278.29 553.20,280.78 553.95,283.49 554.70,286.39 555.45,289.48 556.20,292.74 556.95,296.16 557.70,299.74 558.45,303.45 559.20,307.28 559.95,311.22 560.70,315.26 561.45,319.38 562.20,323.56 562.95,327.79 563.70,332.06 564.45,336.34 565.20,340.63 565.95,344.91 566.70,349.15 567.45,353.36 568.20,357.50 568.95,361.57 569.70,365.55 570.45,369.43 571.20,373.19 571.95,376.82 572.70,380.31 573.45,383.64 574.20,386.79 574.95,389.77 575.70,392.56 576.45,395.14 577.20,397.51 577.95,399.66 578.70,401.59 579.45,403.28 580.20,404.73 580.95,405.93 581.70,406.88 582.45,407.57 583.20,408.01 583.95,408.19 584.70,408.12 585.45,407.78 586.20,407.19 586.95,406.34 587.70,405.24 588.45,403.89 589.20,402.29 589.95,400.46 590.70,398.40 591.45,396.11 592.20,393.62 592.95,390.91 593.70,388.01 594.45,384.92 595.20,381.66 595.95,378.24 596.70,374.66 597.45,370.95 598.20,367.12 598.95,363.18 599.70,359.14 600.45,355.02 601.20,350.84 601.95,346.61 602.70,342.34 603.45,338.06 604.20,333.77 604.95,329.49 605.70,325.25 606.45,321.04 607.20,316.90 607.95,312.83 608.70,308.85 609.45,304.97 610.20,301.21 610.95,297.58 611.70,294.09 612.45,290.76 613.20,287.61 613.95,284.63 614.70,281.84 615.45,279.26 616.20,276.89 616.95,274.74 617.70,272.81 618.45,271.12 619.20,269.67 619.95,268.47 620.70,267.52 621.45,266.83 622.20,266.39 622.95,266.21 623.70,266.28 624.45,266.62 625.20,267.21 625.95,268.06 626.70,269.16 627.45,270.51 628.20,272.11 628.95,273.94 629.70,276.00 630.45,278.29 631.20,280.78 631.95,283.49 632.70,286.39 633.45,289.48 634.20,292.74 634.95,296.16 635.70,299.74 636.45,303.45 637.20,307.28 637.95,311.22 638.70,315.26 639.45,319.38 640.20,323.56 640.95,327.79 641.70,332.06 642.45,336.34 643.20,340.63 643.95,344.91 644.70,349.15 645.45,353.36 646.20,357.50 646.95,361.57 647.70,365.55 648.45,369.43 649.20,373.19 649.95,376.82 650.70,380.31 651.45,383.64 652.20,386.79 652.95,389.77 653.70,392.56 654.45,395.14 655.20,397.51 655.95,399.66 656.70,401.59 657.45,403.28 658.20,404.73 658.95,405.93 659.70,406.88 660.45,407.57 661.20,408.01 661.95,408.19 662.70,408.12 663.45,407.78 664.20,407.19 664.95,406.34 665.70,405.24 666.45,403.89 667.20,402.29 667.95,400.46 668.70,398.40 669.45,396.11 670.20,393.62 670.95,390.91 671.70,388.01 672.45,384.92 673.20,381.66 673.95,378.24 674.70,374.66 675.45,370.95 676.20,367.12 676.95,363.18 677.70,359.14 678.45,355.02 679.20,350.84 679.95,346.61 680.70,342.34 681.45,338.06 682.20,333.77 682.95,329.49 683.70,325.25 684.45,321.04 685.20,316.90 685.95,312.83 686.70,308.85 687.45,304.97 688.20,301.21 688.95,297.58 689.70,294.09 690.45,290.76 691.20,287.61 691.95,284.63 692.70,281.84 693.45,279.26 694.20,276.89 694.95,274.74 695.70,272.81 696.45,271.12 697.20,269.67 697.95,268.47 698.70,267.52 699.45,266.83 700.20,266.39 700.95,266.21 701.70,266.28 702.45,266.62 703.20,267.21 703.95,268.06 704.70,269.16 705.45,270.51 706.20,272.11 706.95,273.94 707.70,276.00 708.45,278.29 709.20,280.78 709.95,283.49 710.70,286.39 711.45,289.48 712.20,292.74 712.95,296.16 713.70,299.74"/>
</svg>
<!-- T markers -->
<svg class="a" style="left:368px;top:0px;" width="10" height="10"><path d="M0.4 0 H9.6 V5 L5 8.6 L0.4 5 Z" fill="#c8eef6"/><path d="M2.6 1.8 H7.4 M5 1.8 V5.6" stroke="#3a4a50" stroke-width="1.1"/></svg><div class="a" style="left:369.5px;top:11px;width:6px;height:1.2px;background:#4a4a4a;"></div>
<svg class="a" style="left:366px;top:34px;" width="14" height="13"><path d="M1.2 0.3 H12.5 V7.5 L6.85 12 L1.2 7.5 Z" fill="#c8eef6"/><path d="M3.8 3 H9.9 M6.85 3 V8.8" stroke="#111" stroke-width="1.6"/></svg>
<svg class="a" style="left:366px;top:131px;" width="14" height="14"><path d="M1.5 0.5 H12.5 V8 L7 13 L1.5 8 Z" fill="#c8eef6"/><path d="M4.3 3 H9.7 M7 3 V9.5" stroke="#111" stroke-width="1.5"/></svg>
<!-- channel 1 marker -->
<div class="t" style="left:-1.5px;top:398.8px;font-size:14.5px;color:#e2df3a;-webkit-text-stroke:0.3px #e2df3a;transform:scaleX(0.95);transform-origin:0 0;">-2.17</div>
<div class="t" style="left:21.3px;top:411.8px;font-size:14px;color:#e2df3a;-webkit-text-stroke:0.3px #e2df3a;">V</div>
<svg class="a" style="left:30px;top:403px;" width="23" height="18"><path d="M0.8 0.9 H15 L21.7 8.2 L15 16.3 H0.8 Z" fill="#f0ec10"/><path d="M9.8 3.2 V12.8" stroke="#000" stroke-width="2.2"/><path d="M6.8 5.6 L10.6 3.2" stroke="#000" stroke-width="1.8"/></svg>
<!-- trigger level arrow -->
<svg class="a" style="left:694px;top:311px;" width="20" height="19"><path d="M2 9.2 L10.5 2 V16.5 Z" fill="#f0ec10"/><rect x="10" y="8.2" width="10" height="2" fill="#e0dc30"/></svg>

<!-- right panel -->
<div class="btn" style="left:717.3px;top:9.3px;width:59.2px;height:125px;"></div>
<div class="box" style="left:719.8px;top:48.3px;width:55.3px;height:47.5px;"></div>
<svg class="a" style="left:736px;top:22px;" width="22" height="16"><path d="M1 13 H6.5 V2.2 H14.5 V13 H20" fill="none" stroke="#0c0c0c" stroke-width="2.2"/></svg>
<svg class="a" style="left:736px;top:108px;" width="22" height="14"><path d="M1 10.6 H6.5 V2.2 H14.5 V10.6 H20" fill="none" stroke="#0c0c0c" stroke-width="2.4"/></svg>
<div class="t" style="left:737.5px;top:50.5px;font-size:16px;font-weight:bold;color:#ecea2c;transform:scaleX(0.95);transform-origin:0 0;">1V</div>
<div class="t" style="left:762.5px;top:69.8px;font-size:11.5px;color:#b0b0b0;-webkit-text-stroke:0.2px #b0b0b0;">F</div>
<div class="t" style="left:736.3px;top:83px;font-size:12px;color:#b4b4b4;-webkit-text-stroke:0.1px #b4b4b4;">10X</div>
<svg class="a" style="left:725px;top:71px;" width="12" height="8"><path d="M1 2.2 H10" stroke="#d0d0d0" stroke-width="1.3"/><path d="M1 6.5 H10" stroke="#c8c8c8" stroke-width="1" stroke-dasharray="1.2 1.2"/></svg>

<div class="btn" style="left:717.2px;top:151.8px;width:59.3px;height:60.7px;"></div>
<div class="t" style="left:742px;top:172px;font-size:20px;font-weight:bold;color:#22d6e6;">2</div>

<svg class="a" style="left:714px;top:254px;" width="64" height="52">
<path d="M2.4 24.8 L6.1 21.8 V27.8 Z" fill="#c8c8c8"/>
<circle cx="33.6" cy="25.6" r="23.6" fill="#343232" stroke="#1d8fd2" stroke-width="2.6"/>
<circle cx="33.6" cy="25.6" r="21.4" fill="none" stroke="#0d0d0d" stroke-width="1.8"/>
</svg>
<div class="t" style="left:733.3px;top:273px;font-size:13.5px;font-weight:bold;color:#2b9ad8;-webkit-text-stroke:0.3px #2b9ad8;transform:scaleX(0.92);transform-origin:0 0;">Level</div>

<div class="btn" style="left:717px;top:347.5px;width:59.5px;height:59.7px;"></div>
<div class="t" style="left:741.5px;top:366.5px;font-size:20.5px;font-weight:bold;color:#e020e0;">3</div>
<div class="btn" style="left:717px;top:456.9px;width:59.5px;height:59.6px;"></div>
<div class="t" style="left:741.5px;top:476.5px;font-size:20.5px;font-weight:bold;color:#22e022;">4</div>

<!-- bottom bar -->
<div class="btn" style="left:31.8px;top:529.2px;width:49.3px;height:49.4px;"></div>
<div class="t" style="left:43.2px;top:546.5px;font-size:16px;color:#2c9cd8;-webkit-text-stroke:0.2px #2c9cd8;transform:scaleX(0.89);transform-origin:0 0;">CHx</div>
<svg class="a" style="left:111px;top:527px;" width="54" height="54"><circle cx="26.5" cy="26.8" r="23.2" fill="#383737" stroke="#0a0a0a" stroke-width="2.8"/><path d="M8 16 A21 21 0 0 1 45 16" fill="none" stroke="#434242" stroke-width="1"/></svg>
<div class="t" style="left:123px;top:546px;font-size:15.5px;color:#2f9fdb;-webkit-text-stroke:0.2px #2f9fdb;">Fine</div>
<div class="btn" style="left:194.2px;top:528.9px;width:50.5px;height:49.7px;"></div>
<svg class="a" style="left:205px;top:537.5px;" width="30" height="34">
<path d="M4.2 3.5 H17.2 L24.6 11 V28.8 H4.2 Z M10.3 28.8 V17.8 H19 V28.8" fill="none" stroke="#0a2236" stroke-width="2.6"/>
<path d="M4.2 3.5 H17.2 L24.6 11 V28.8 H4.2 Z M10.3 28.8 V17.8 H19 V28.8" fill="none" stroke="#2590d0" stroke-width="1.1"/>
<path d="M8.6 11.2 H13.6" stroke="#0a2236" stroke-width="2.6" stroke-linecap="round"/>
<path d="M8.6 11.2 H13.6" stroke="#2590d0" stroke-width="1.2" stroke-linecap="round"/>
</svg>

<div class="btn" style="left:276.3px;top:529.2px;width:189.6px;height:49.4px;"></div>
<div class="a" style="left:338.2px;top:531px;width:1.6px;height:45px;background:#161616;"></div>
<div class="a" style="left:402.8px;top:531px;width:1.6px;height:45px;background:#161616;"></div>
<div class="box" style="left:347.1px;top:535.9px;width:49px;height:35px;"></div>
<div class="t" style="left:356.5px;top:537.3px;font-size:16.5px;color:#c4c4c4;-webkit-text-stroke:0.15px #c4c4c4;transform:scaleX(0.93);transform-origin:0 0;">5ms</div>
<div class="t" style="left:354.8px;top:554.5px;font-size:16.5px;color:#c4c4c4;-webkit-text-stroke:0.15px #c4c4c4;transform:scaleX(0.93);transform-origin:0 0;">50us</div>
<svg class="a" style="left:292px;top:543px;" width="34" height="20"><path d="M2.6 16.4 H7.1 V3.9 H13.2 V16.4 H18.7 V3.9 H25.5 V16.4 H30.3" fill="none" stroke="#080808" stroke-width="1.9"/></svg>
<svg class="a" style="left:419px;top:543px;" width="32" height="20"><path d="M2.2 16.7 H9.2 V3.9 H22.2 V16.7 H28.9" fill="none" stroke="#080808" stroke-width="1.9"/></svg>

<div class="btn" style="left:530.2px;top:529px;width:48.8px;height:49.4px;"></div>
<svg class="a" style="left:538px;top:542px;" width="34" height="22">
<path d="M4.2 6.2 H7.3 M14.9 6.2 H18.6 M26.2 6.2 H29.7 M4.2 16.7 H29.7" fill="none" stroke="#08182a" stroke-width="3.6" stroke-linecap="round"/>
<path d="M4.2 6.2 H7.3 M14.9 6.2 H18.6 M26.2 6.2 H29.7 M4.2 16.7 H29.7" fill="none" stroke="#2184c2" stroke-width="1.5" stroke-linecap="round"/>
</svg>
<div class="btn" style="left:604.5px;top:529px;width:48.8px;height:49.4px;"></div>
<svg class="a" style="left:615px;top:536px;" width="26" height="36">
<path d="M8.4 5 V8.1 M8.4 15.8 V19.6 M8.4 26.7 V30.3 M19.1 5 V30.3" fill="none" stroke="#08182a" stroke-width="3.6" stroke-linecap="round"/>
<path d="M8.4 5 V8.1 M8.4 15.8 V19.6 M8.4 26.7 V30.3 M19.1 5 V30.3" fill="none" stroke="#2184c2" stroke-width="1.5" stroke-linecap="round"/>
</svg>

<!-- status -->
<svg class="a" style="left:740px;top:549px;" width="38" height="35">
<path d="M1.9 6.2 A12.9 12.9 0 0 1 20.1 6.2" fill="none" stroke="#a8a8a8" stroke-width="1.3"/>
<path d="M5.9 10.7 A6.7 6.7 0 0 1 16.1 10.7" fill="none" stroke="#a8a8a8" stroke-width="1.3"/>
<circle cx="10.8" cy="14.7" r="1.3" fill="#a8a8a8"/>
<rect x="21.8" y="2.5" width="14" height="9" fill="none" stroke="#a8a8a8" stroke-width="1.2"/>
<path d="M28.8 11.5 V14 M24 14.8 H33.5" stroke="#a8a8a8" stroke-width="1.3"/>
<rect x="25.5" y="18.5" width="10" height="16" fill="none" stroke="#a8a8a8" stroke-width="1.2"/>
<rect x="28" y="16.5" width="5" height="2" fill="#a8a8a8"/>
<path d="M31.5 21.5 L28.5 27 H31 L29.5 32 L33 26 H30.5 Z" fill="#a8a8a8"/>
</svg>
<div class="t" style="left:731px;top:572px;font-size:12px;color:#b0b0b0;">10:52</div>
</body></html>
